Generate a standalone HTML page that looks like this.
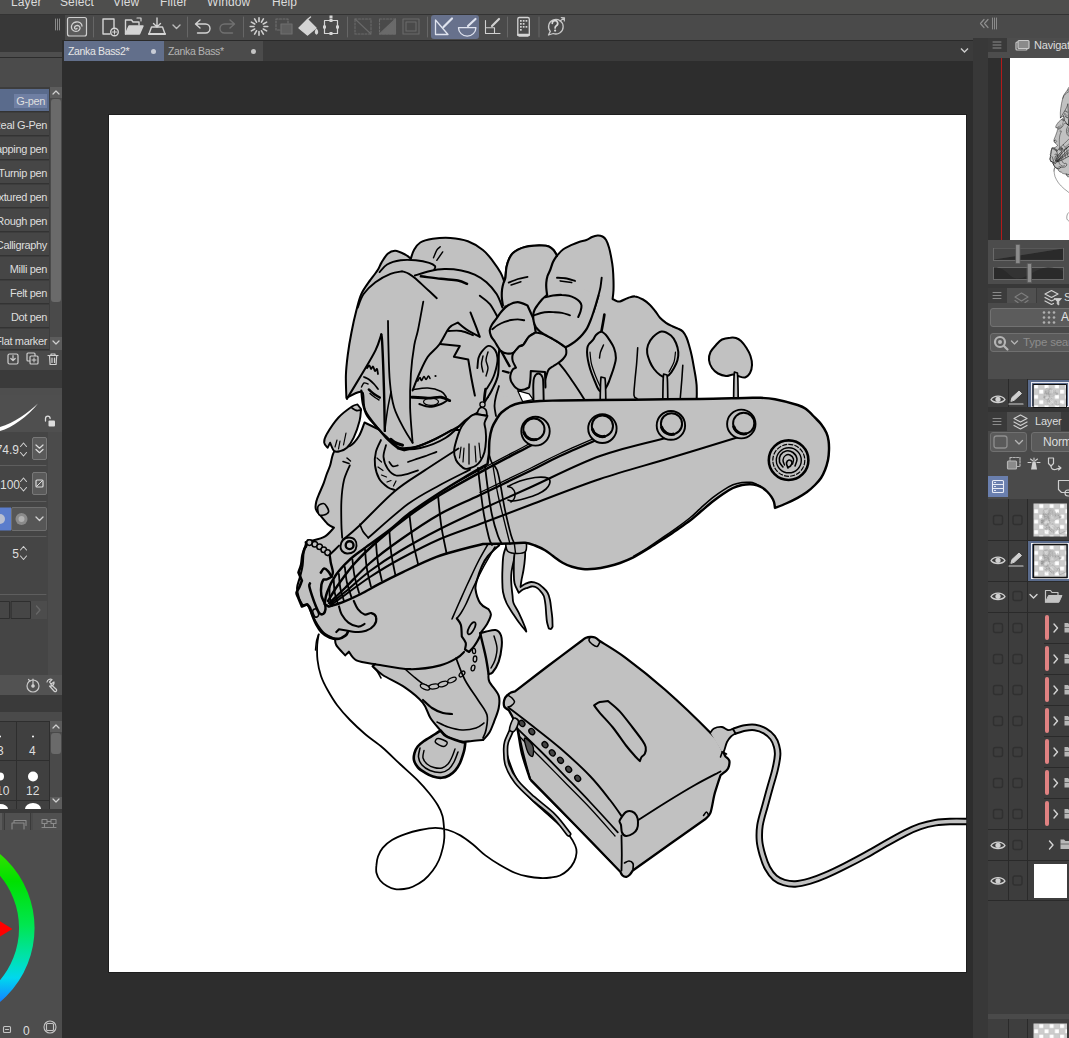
<!DOCTYPE html>
<html><head><meta charset="utf-8">
<style>
*{box-sizing:border-box;margin:0;padding:0}
html,body{width:1069px;height:1038px;overflow:hidden;background:#2d2d2d;font-family:"Liberation Sans",sans-serif;font-size:12px;color:#d2d2d2}
.a{position:absolute}
#menubar{left:0;top:0;width:1069px;height:14px;background:#4e4e4d}
#menubar span{position:absolute;top:-5px;font-size:12px;color:#dcdcdc;letter-spacing:.1px}
#toolbar{left:0;top:14px;width:1069px;height:26px;background:#4a4a4a;border-top:1px solid #333}
#tabrow{left:64px;top:39.5px;width:908.5px;height:21.5px;background:#3b3b3b;border-top:1.5px solid #2a2a2a}
.tab{position:absolute;top:0;height:20px;font-size:10.5px;letter-spacing:-.35px;line-height:20px;padding-left:4px}
#canvasbg{left:63px;top:61px;width:910px;height:977px;background:#2d2d2d}
#canvas{left:109px;top:115px;width:857.3px;height:857px;background:#fff;box-shadow:0 0 0 1px #1e1e1e}
#left{left:0;top:40px;width:62.3px;height:998px;background:#4a4a4a;overflow:hidden}
#right{left:974px;top:14px;width:95px;height:1024px;background:#3c3c3c}
.it{position:absolute;left:0;width:49px;height:23px;background:#464646;border-bottom:1px solid #333;text-align:right;padding-right:2px;line-height:24px;font-size:11px;letter-spacing:-.35px;color:#dedede;white-space:nowrap;overflow:hidden;direction:rtl}
</style></head><body>
<!--CANVASBG-->
<div class="a" id="canvasbg"></div>
<div class="a" id="canvas"></div>
<svg class="a" style="left:0;top:0" width="1069" height="1038" viewBox="0 0 1069 1038"><defs><clipPath id="cv"><rect x="109" y="115" width="857.3" height="857"/></clipPath></defs><g clip-path="url(#cv)" id="artg"><path d="M505.4,277.7C505.6,275.9 505.8,270.3 506.5,267.0C507.2,263.7 508.4,260.3 509.5,258.0C510.6,255.7 511.6,254.4 513.0,253.0C514.4,251.6 515.7,250.8 517.7,249.8C519.7,248.8 522.3,247.7 525.0,247.0C527.7,246.3 531.2,245.9 534.0,245.7C536.8,245.4 539.5,245.4 542.0,245.5C544.5,245.6 546.9,245.8 548.8,246.5C550.7,247.2 552.1,248.5 553.5,250.0C554.9,251.5 556.4,254.7 557.0,255.6C558.0,254.6 560.5,251.3 563.0,249.5C565.5,247.7 569.0,246.2 571.7,244.9C574.4,243.7 576.5,242.8 579.0,242.0C581.5,241.2 584.2,240.8 586.4,240.0C588.6,239.2 590.1,237.8 592.0,237.0C593.9,236.2 595.9,235.6 597.6,235.5C599.4,235.4 601.1,235.8 602.5,236.5C603.9,237.2 605.0,238.2 606.1,240.0C607.2,241.8 608.2,244.8 609.0,247.5C609.8,250.2 610.4,253.0 611.0,256.4C611.6,259.8 612.4,263.9 612.8,268.0C613.2,272.1 613.4,277.2 613.5,280.9C613.6,284.6 613.6,287.0 613.5,290.0C613.4,293.0 612.8,297.5 612.6,299.0C613.2,299.3 614.8,300.4 616.0,300.8C617.2,301.2 618.0,301.9 620.0,301.4C622.0,300.9 625.5,298.8 628.0,298.0C630.5,297.2 632.5,296.1 635.0,296.4C637.5,296.6 640.5,298.1 643.0,299.5C645.5,300.9 647.9,303.0 650.0,305.0C652.1,307.0 653.8,309.4 655.5,311.5C657.2,313.6 658.2,315.8 660.0,317.7C661.8,319.6 663.9,321.3 666.0,322.8C668.1,324.3 670.8,325.5 672.8,326.5C674.8,327.5 676.3,327.8 678.0,328.6C679.7,329.4 681.4,330.0 682.8,331.5C684.2,333.0 685.5,335.2 686.5,337.5C687.5,339.8 688.1,341.9 689.0,345.0C689.9,348.1 691.0,352.2 691.8,356.0C692.6,359.8 693.4,364.3 694.0,367.8C694.6,371.3 695.2,374.1 695.6,377.0C696.0,379.9 696.4,382.3 696.6,385.0C696.8,387.7 696.8,390.0 696.8,393.0C696.8,396.0 696.6,401.3 696.6,403.0L600.0,406.0L520.0,412.0L488.0,412.0L488.0,300.0L505.4,277.7Z" fill="#c1c1c1" stroke="#000" stroke-width="2.04" stroke-linejoin="round" stroke-linecap="round"/>
<path d="M637.7,347.7C637.5,350.6 637.0,359.6 636.5,365.0C636.0,370.4 635.4,374.9 635.0,380.0C634.6,385.1 633.7,392.2 634.0,395.3C634.3,398.4 636.5,398.0 637.0,398.5" fill="none" stroke="#000" stroke-width="1.56" stroke-linejoin="round" stroke-linecap="round"/>
<path d="M682.8,365.3C682.6,367.8 682.2,374.6 681.8,380.0C681.4,385.4 680.5,394.8 680.3,397.8" fill="none" stroke="#000" stroke-width="1.56" stroke-linejoin="round" stroke-linecap="round"/>
<path d="M601.7,277.7C601.5,279.2 601.0,284.0 600.5,287.0C600.0,290.0 599.1,292.9 598.4,295.7C597.6,298.5 596.8,301.3 596.0,304.0C595.2,306.7 593.9,310.7 593.5,312.0" fill="none" stroke="#000" stroke-width="1.92" stroke-linejoin="round" stroke-linecap="round"/>
<path d="M604.4,314.5C604.2,315.9 603.5,320.2 603.0,323.0C602.5,325.8 601.8,329.7 601.5,331.0" fill="none" stroke="#000" stroke-width="2.64" stroke-linejoin="round" stroke-linecap="round"/>
<path d="M601.2,331.7C599.6,331.8 597.4,333.6 596.0,335.0C594.6,336.4 594.2,338.4 593.0,339.9C591.8,341.4 590.0,342.6 589.0,344.0C588.0,345.4 587.6,346.1 587.3,348.1C587.0,350.1 587.0,353.3 587.3,356.0C587.6,358.7 588.2,361.6 588.9,364.4C589.6,367.2 590.5,370.3 591.5,373.0C592.5,375.7 593.7,378.6 594.6,380.8C595.5,383.1 596.2,384.9 597.0,386.5C597.8,388.1 598.5,389.9 599.5,390.7C600.5,391.4 601.9,391.6 603.0,391.0C604.1,390.4 605.1,388.9 606.1,387.4C607.1,385.9 608.0,383.9 608.8,382.0C609.6,380.1 610.1,378.4 611.0,375.9C611.9,373.4 613.2,370.0 614.0,367.0C614.8,364.0 615.9,361.1 615.9,357.9C615.9,354.7 615.1,351.0 614.0,348.0C612.9,345.0 610.8,342.1 609.4,339.9C608.0,337.6 606.9,335.9 605.5,334.5C604.1,333.1 602.8,331.6 601.2,331.7Z" fill="#c1c1c1" stroke="#000" stroke-width="2.04" stroke-linejoin="round" stroke-linecap="round"/>
<path d="M600.2,401.0C600.2,398.3 600.4,389.0 600.5,385.0C600.6,381.0 600.9,378.3 601.0,377.0L605.0,378.0C605.1,379.2 605.4,381.2 605.5,385.0C605.6,388.8 605.8,398.3 605.8,401.0" fill="#c1c1c1" stroke="#000" stroke-width="1.68" stroke-linejoin="round" stroke-linecap="round"/>
<path d="M661.5,331.5C658.5,331.8 655.2,334.8 653.0,337.0C650.8,339.2 649.0,342.3 648.0,345.0C647.0,347.7 646.9,350.2 647.2,353.0C647.5,355.8 648.9,359.3 650.0,362.0C651.1,364.7 652.3,366.8 654.0,369.0C655.7,371.2 658.2,373.7 660.0,375.0C661.8,376.3 663.0,377.0 664.5,377.0C666.0,377.0 667.4,376.5 669.0,375.0C670.6,373.5 672.6,370.5 674.0,368.0C675.4,365.5 676.8,362.7 677.5,360.0C678.2,357.3 678.5,354.8 678.3,352.0C678.0,349.2 677.2,345.8 676.0,343.0C674.8,340.2 673.4,337.4 671.0,335.5C668.6,333.6 664.5,331.2 661.5,331.5Z" fill="#c1c1c1" stroke="#000" stroke-width="2.04" stroke-linejoin="round" stroke-linecap="round"/>
<path d="M662.8,401.0C662.8,397.8 663.0,386.5 663.1,382.0C663.2,377.5 663.5,375.3 663.6,374.0L667.0,375.0C667.1,376.2 667.4,377.7 667.5,382.0C667.6,386.3 667.8,397.8 667.8,401.0" fill="#c1c1c1" stroke="#000" stroke-width="1.68" stroke-linejoin="round" stroke-linecap="round"/>
<path d="M730.4,337.7C728.1,337.9 724.4,338.3 722.0,339.5C719.6,340.7 717.9,342.9 716.0,345.0C714.1,347.1 711.7,349.5 710.5,352.0C709.3,354.5 708.8,357.3 709.0,360.0C709.2,362.7 710.5,365.8 712.0,368.0C713.5,370.2 715.7,372.2 718.0,373.5C720.3,374.8 723.5,375.8 726.0,376.0C728.5,376.2 731.0,374.5 733.0,374.5C735.0,374.5 736.0,375.5 738.0,376.0C740.0,376.5 743.0,378.0 745.0,377.5C747.0,377.0 748.8,375.1 750.0,373.0C751.2,370.9 751.9,367.8 752.0,365.0C752.1,362.2 751.4,358.8 750.5,356.0C749.6,353.2 748.1,350.5 746.5,348.0C744.9,345.5 742.8,342.7 741.0,341.0C739.2,339.3 737.8,338.6 736.0,338.0C734.2,337.4 732.7,337.4 730.4,337.7Z" fill="#c1c1c1" stroke="#000" stroke-width="2.04" stroke-linejoin="round" stroke-linecap="round"/>
<path d="M733.6,401.0C733.6,397.5 733.8,384.8 733.9,380.0C734.0,375.2 734.3,373.3 734.4,372.0L737.4,373.0C737.5,374.2 737.8,375.3 737.9,380.0C738.0,384.7 738.2,397.5 738.2,401.0" fill="#c1c1c1" stroke="#000" stroke-width="1.68" stroke-linejoin="round" stroke-linecap="round"/>
<path d="M603.5,345.0C603.0,346.2 601.2,349.8 600.5,352.0C599.8,354.2 599.7,357.0 599.5,358.0" fill="none" stroke="#000" stroke-width="1.44" stroke-linejoin="round" stroke-linecap="round"/>
<path d="M590.0,352.0C590.2,354.0 590.5,359.8 591.5,364.0C592.5,368.2 594.6,373.3 596.0,377.0C597.4,380.7 599.3,384.5 600.0,386.0" fill="none" stroke="#000" stroke-width="1.2" stroke-linejoin="round" stroke-linecap="round"/>
<path d="M675.5,352.0C675.2,353.7 675.1,358.7 674.0,362.0C672.9,365.3 669.8,370.3 669.0,372.0" fill="none" stroke="#000" stroke-width="1.2" stroke-linejoin="round" stroke-linecap="round"/>
<path d="M380.0,430.0L364.5,422.5C363.6,424.8 361.4,432.1 359.0,436.0C356.6,439.9 354.0,443.6 350.0,446.0C346.0,448.4 338.4,447.1 335.1,450.4C331.8,453.6 331.6,461.4 330.1,465.5C328.7,469.6 327.4,472.1 326.4,475.0C325.4,477.9 325.0,479.6 323.9,482.6C322.8,485.6 320.8,489.9 319.5,493.0C318.2,496.1 316.9,498.8 316.3,501.4C315.7,504.0 315.2,506.6 315.8,508.9C316.4,511.2 318.1,512.7 320.1,515.2C322.1,517.7 325.3,521.8 327.6,523.9C329.9,526.0 332.8,527.1 333.9,527.7C332.4,529.2 328.5,534.3 325.1,536.4C321.8,538.5 316.7,539.6 313.8,540.2C310.9,540.8 308.6,540.2 307.6,540.2C307.4,541.2 306.9,544.8 306.3,546.5C305.7,548.2 304.4,547.1 303.8,550.2C303.2,553.3 303.2,560.9 302.6,565.3C302.0,569.7 301.0,572.8 300.1,576.5C299.2,580.2 297.3,584.2 297.1,587.8C296.9,591.3 297.9,594.9 298.8,597.8C299.7,600.7 302.0,604.0 302.6,605.3C303.4,605.3 306.2,604.0 307.6,605.3C309.1,606.6 309.9,610.0 311.3,612.9C312.8,615.8 314.2,619.6 316.3,622.9C318.4,626.2 320.8,630.2 323.9,632.9C327.0,635.6 333.2,638.1 335.1,639.1C335.3,640.1 334.7,642.7 336.4,645.4C338.1,648.1 343.7,653.7 345.2,655.4L348.9,651.7C350.1,653.2 352.0,658.3 356.4,660.4C360.8,662.5 372.1,663.6 375.2,664.2L372.6,666.3C374.3,667.8 377.3,671.5 382.7,675.0C388.1,678.5 398.5,683.0 405.2,687.6C411.9,692.2 418.5,697.6 422.7,702.6C426.9,707.6 427.4,713.1 430.3,717.7C433.2,722.3 438.6,728.1 440.3,730.2C441.3,731.2 443.2,734.5 446.5,736.4C449.8,738.3 456.1,740.7 460.3,741.5C464.6,742.3 468.2,741.2 472.0,741.0C475.8,740.8 481.3,740.2 483.2,740.0C484.2,738.8 487.6,735.6 489.4,732.6C491.2,729.6 492.4,725.9 494.0,721.8C495.6,717.7 497.9,712.4 498.7,708.0C499.5,703.6 500.2,700.0 498.7,695.6C497.1,691.2 491.1,685.3 489.4,681.7C487.7,678.1 488.7,675.3 488.6,674.0C489.2,673.8 490.8,674.5 492.5,672.5C494.2,670.5 497.2,666.1 498.7,661.7C500.2,657.3 501.3,650.7 501.7,646.3C502.1,641.9 502.0,638.2 501.0,635.5C500.0,632.8 498.1,630.6 495.6,630.0C493.2,629.4 487.9,631.3 486.3,631.6L480.2,633.2C481.4,631.7 485.3,627.0 487.1,623.9C488.9,620.8 490.6,617.1 490.9,614.7C491.1,612.3 489.0,610.2 488.6,609.3C487.2,608.3 482.4,606.5 480.2,603.1C478.0,599.8 476.0,593.1 475.5,589.2C475.0,585.4 475.9,583.9 477.0,580.0C478.1,576.1 480.2,570.0 482.0,566.0C483.8,562.0 485.1,559.5 488.0,556.0C490.9,552.5 497.3,547.0 499.2,545.2L500.0,470.0L470.0,430.0L380.0,430.0Z" fill="#c1c1c1" stroke="#000" stroke-width="2.04" stroke-linejoin="round" stroke-linecap="round"/>
<path d="M470.0,400.0L508.0,396.0L502.0,472.0L470.0,445.0L470.0,400.0Z" fill="#c1c1c1" stroke="none"/>
<path d="M499.0,386.0C498.5,387.7 496.8,392.7 496.0,396.0C495.2,399.3 494.5,402.7 494.5,406.0C494.5,409.3 495.8,414.3 496.0,416.0" fill="none" stroke="#000" stroke-width="1.8" stroke-linejoin="round" stroke-linecap="round"/>
<path d="M346.4,397.8C346.3,394.1 345.7,382.4 345.9,375.3C346.1,368.2 346.8,362.4 347.7,355.3C348.6,348.2 349.9,340.2 351.4,332.7C352.8,325.2 354.7,316.7 356.4,310.2C358.1,303.7 359.1,298.9 361.4,293.9C363.7,288.9 368.7,282.4 370.2,280.1C371.4,278.4 375.8,272.9 377.7,270.0C379.6,267.1 379.8,265.3 381.5,262.6C383.2,259.9 385.4,255.8 387.7,253.8C390.0,251.8 392.4,250.7 395.3,250.8C398.2,250.9 402.7,253.3 405.3,254.6C407.9,255.9 409.9,258.1 410.8,258.8C411.3,257.3 412.4,252.7 414.0,250.0C415.6,247.3 417.2,244.4 420.3,242.5C423.4,240.6 427.8,239.6 432.8,238.8C437.8,238.1 444.5,237.6 450.4,238.0C456.2,238.4 462.5,239.3 467.9,241.3C473.3,243.3 478.7,246.7 482.9,250.0C487.1,253.3 490.1,257.5 493.0,261.3C495.9,265.1 498.6,269.2 500.5,272.6C502.4,276.0 503.6,279.9 504.2,281.4C504.5,284.5 506.4,291.9 506.0,300.0C505.6,308.1 503.2,321.3 502.0,330.0C500.8,338.7 499.7,344.5 499.0,352.0C498.3,359.5 499.2,368.7 498.0,375.0C496.8,381.3 494.0,385.8 492.0,390.0C490.0,394.2 488.3,396.3 486.0,400.0C483.7,403.7 481.4,408.6 478.0,412.0C474.6,415.4 470.8,416.1 465.4,420.4C460.0,424.7 452.9,433.4 445.4,438.0C437.9,442.6 427.8,446.3 420.3,448.0C412.8,449.7 405.7,449.7 400.3,448.0C394.9,446.3 391.5,441.4 387.7,438.0C383.9,434.6 381.4,432.5 377.7,427.9C373.9,423.3 367.7,416.2 365.2,410.4C362.7,404.5 364.2,395.7 362.7,392.8C361.2,389.9 357.1,393.0 356.0,393.0L346.4,397.8Z" fill="#c1c1c1" stroke="#000" stroke-width="2.04" stroke-linejoin="round" stroke-linecap="round"/>
<path d="M379.6,272.1C380.9,270.8 383.6,266.5 387.1,264.5C390.6,262.5 395.8,261.0 400.6,260.3C405.4,259.6 411.0,259.9 415.8,260.3C420.6,260.7 426.0,261.8 429.2,262.8C432.4,263.8 434.2,265.1 435.1,266.2C436.0,267.3 434.4,269.0 434.3,269.6" fill="none" stroke="#000" stroke-width="1.92" stroke-linejoin="round" stroke-linecap="round"/>
<path d="M357.7,307.5C358.7,305.2 360.7,298.2 363.6,294.0C366.6,289.8 370.9,285.6 375.4,282.2C379.9,278.8 386.0,275.6 390.5,273.8C395.0,272.0 400.3,271.7 402.3,271.3C403.4,271.7 406.8,272.6 409.0,273.8C411.2,275.1 413.0,276.4 415.8,278.8C418.6,281.2 422.4,284.9 425.9,288.1C429.4,291.3 435.0,296.5 436.8,298.2" fill="none" stroke="#000" stroke-width="1.92" stroke-linejoin="round" stroke-linecap="round"/>
<path d="M414.9,275.5C417.3,274.8 424.3,272.4 429.2,271.3C434.1,270.2 439.1,269.2 444.4,269.1C449.7,269.0 456.1,269.5 461.2,270.4C466.2,271.3 470.5,272.6 474.7,274.6C478.9,276.6 482.9,279.0 486.5,282.2C490.1,285.4 493.9,289.8 496.6,294.0C499.3,298.2 501.5,305.2 502.5,307.5" fill="none" stroke="#000" stroke-width="2.04" stroke-linejoin="round" stroke-linecap="round"/>
<path d="M420.8,276.3C424.2,276.7 434.8,278.1 441.0,278.8C447.2,279.5 453.5,279.6 457.9,280.5C462.2,281.4 465.6,283.3 467.1,283.9" fill="none" stroke="#000" stroke-width="2.4" stroke-linejoin="round" stroke-linecap="round"/>
<path d="M479.8,295.7C481.5,297.1 487.0,300.6 489.9,304.1C492.8,307.6 496.1,314.6 497.4,316.7" fill="none" stroke="#000" stroke-width="1.92" stroke-linejoin="round" stroke-linecap="round"/>
<path d="M433.5,257.8C434.1,256.5 435.7,252.0 436.8,250.2C437.9,248.4 439.6,247.4 440.2,246.8" fill="none" stroke="#000" stroke-width="1.44" stroke-linejoin="round" stroke-linecap="round"/>
<path d="M436.8,260.3L442.7,251.9" fill="none" stroke="#000" stroke-width="1.44" stroke-linejoin="round" stroke-linecap="round"/>
<path d="M423.3,301.6C422.4,306.3 419.5,322.8 418.0,330.0C416.5,337.2 415.5,337.7 414.3,345.0C413.1,352.3 411.6,363.3 410.9,373.7C410.2,384.1 409.8,395.9 410.1,407.4C410.4,418.9 412.2,436.8 412.6,442.7" fill="none" stroke="#000" stroke-width="1.8" stroke-linejoin="round" stroke-linecap="round"/>
<path d="M388.0,320.9C388.1,324.9 388.1,334.8 388.4,345.0C388.7,355.2 388.9,371.7 389.9,382.1C390.8,392.5 391.7,399.5 394.1,407.4C396.5,415.2 401.1,423.3 404.2,429.2C407.3,435.1 411.2,440.4 412.6,442.7" fill="none" stroke="#000" stroke-width="1.8" stroke-linejoin="round" stroke-linecap="round"/>
<path d="M346.9,398.9C349.4,394.7 357.3,381.8 362.1,373.7C366.9,365.6 372.4,356.7 375.6,350.1C378.8,343.6 380.4,337.0 381.3,334.4" fill="none" stroke="#000" stroke-width="2.04" stroke-linejoin="round" stroke-linecap="round"/>
<path d="M381.3,334.4C381.5,336.2 381.9,335.6 382.3,345.0C382.8,354.4 383.6,376.2 384.0,390.5C384.4,404.8 384.7,424.2 384.8,430.9" fill="none" stroke="#000" stroke-width="2.4" stroke-linejoin="round" stroke-linecap="round"/>
<path d="M384.8,430.9C385.2,427.4 386.5,416.5 387.5,410.0C388.5,403.5 390.4,395.0 391.0,392.0" fill="none" stroke="#000" stroke-width="1.56" stroke-linejoin="round" stroke-linecap="round"/>
<path d="M470.5,312.5C471.5,315.0 474.8,323.6 476.4,327.7C477.9,331.8 479.2,335.4 479.8,336.9C477.6,335.6 470.0,331.7 466.3,329.3C462.6,326.9 459.3,323.7 457.9,322.6C456.5,323.5 452.5,324.1 449.4,327.7C446.3,331.3 442.9,339.6 439.3,344.5C435.7,349.4 431.1,351.9 427.8,356.8C424.5,361.7 421.8,368.1 419.3,373.7C416.8,379.3 413.7,387.7 412.6,390.5" fill="none" stroke="#000" stroke-width="2.04" stroke-linejoin="round" stroke-linecap="round"/>
<path d="M448.6,331.0C450.7,331.0 457.1,330.3 461.2,331.0C465.3,331.7 471.0,334.5 473.0,335.2" fill="none" stroke="#000" stroke-width="1.8" stroke-linejoin="round" stroke-linecap="round"/>
<path d="M440.0,344.0L459.8,345.9L453.9,356.8L468.2,359.4C468.8,362.6 470.4,372.7 471.5,378.7C472.6,384.7 474.3,392.8 474.9,395.6" fill="none" stroke="#000" stroke-width="2.04" stroke-linejoin="round" stroke-linecap="round"/>
<path d="M477.4,368.0C477.6,366.3 477.8,360.7 478.5,358.0C479.2,355.3 480.0,353.8 481.6,351.8C483.2,349.8 486.1,346.2 488.4,345.9C490.6,345.6 493.6,348.1 495.1,350.1C496.6,352.1 497.2,355.5 497.5,358.0C497.8,360.5 497.3,362.6 496.8,365.3C496.3,368.0 495.3,371.5 494.5,374.0C493.7,376.5 493.1,377.9 491.8,380.4C490.5,382.9 487.6,387.4 486.7,388.8" fill="none" stroke="#000" stroke-width="1.92" stroke-linejoin="round" stroke-linecap="round"/>
<path d="M483.0,356.0C482.8,357.3 481.5,361.3 481.5,364.0C481.5,366.7 482.8,370.7 483.0,372.0" fill="none" stroke="#000" stroke-width="1.44" stroke-linejoin="round" stroke-linecap="round"/>
<path d="M488.0,352.0C487.7,353.3 486.0,357.3 486.0,360.0C486.0,362.7 488.0,365.3 488.0,368.0C488.0,370.7 486.3,374.7 486.0,376.0" fill="none" stroke="#000" stroke-width="1.44" stroke-linejoin="round" stroke-linecap="round"/>
<path d="M485.6,389.0C485.4,390.2 484.8,394.1 484.6,396.0C484.4,397.9 484.3,399.8 484.2,400.6" fill="none" stroke="#000" stroke-width="2.64" stroke-linejoin="round" stroke-linecap="round"/>
<circle cx="482.5" cy="404.5" r="2.6" fill="#c1c1c1" stroke="#000" stroke-width="1.3"/>
<path d="M477.0,414.0C477.3,413.2 478.1,410.1 479.0,409.0C479.9,407.9 481.3,407.3 482.5,407.5C483.7,407.7 485.2,408.7 486.0,410.0C486.8,411.3 486.8,414.6 487.0,415.5L477.0,414.0Z" fill="#c1c1c1" stroke="#000" stroke-width="1.68" stroke-linejoin="round" stroke-linecap="round"/>
<path d="M357.5,404.5C356.6,404.8 355.2,404.3 352.0,406.5C348.8,408.7 342.7,412.9 338.5,417.5C334.3,422.1 329.1,430.1 326.7,434.3C324.3,438.5 324.0,440.4 324.2,442.7C324.4,444.9 327.0,446.9 327.6,447.8L330.1,442.7C330.8,444.1 332.6,449.7 334.3,451.1C336.0,452.5 338.1,451.7 340.2,451.1C342.3,450.6 344.6,450.0 346.9,447.8C349.1,445.6 351.6,442.2 353.7,437.7C355.8,433.2 358.4,425.6 359.6,420.8C360.8,416.0 360.8,411.0 361.0,409.0L357.5,404.5Z" fill="#c1c1c1" stroke="#000" stroke-width="1.92" stroke-linejoin="round" stroke-linecap="round"/>
<path d="M352.0,408.0C352.8,408.4 355.0,410.2 356.5,410.5C358.0,410.8 360.2,410.1 361.0,410.0" fill="none" stroke="#000" stroke-width="1.8" stroke-linejoin="round" stroke-linecap="round"/>
<path d="M337.0,440.0L335.0,447.0" fill="none" stroke="#000" stroke-width="1.2" stroke-linejoin="round" stroke-linecap="round"/>
<path d="M340.0,441.0L338.5,449.0" fill="none" stroke="#000" stroke-width="1.2" stroke-linejoin="round" stroke-linecap="round"/>
<path d="M346.0,433.0L343.5,445.0" fill="none" stroke="#000" stroke-width="1.2" stroke-linejoin="round" stroke-linecap="round"/>
<path d="M476.0,414.0C475.1,414.4 472.7,414.5 470.4,416.5C468.1,418.5 464.1,422.9 462.0,426.0C459.9,429.1 459.2,431.3 457.9,435.4C456.6,439.5 454.4,446.3 454.1,450.4C453.8,454.5 454.9,457.5 456.0,460.0C457.1,462.5 458.9,464.0 460.4,465.5C461.9,467.0 463.3,468.4 465.0,468.8C466.7,469.2 468.6,468.6 470.4,468.0C472.2,467.4 474.3,466.7 476.0,465.5C477.7,464.3 479.0,463.2 480.4,461.0C481.8,458.8 483.6,455.4 484.5,452.0C485.4,448.6 485.8,444.1 486.0,440.4C486.2,436.7 485.9,432.9 485.6,430.0C485.4,427.1 484.2,425.3 484.5,423.0C484.8,420.7 487.0,417.2 487.5,416.0L476.0,414.0Z" fill="#c1c1c1" stroke="#000" stroke-width="1.92" stroke-linejoin="round" stroke-linecap="round"/>
<path d="M461.0,447.0L459.5,458.0" fill="none" stroke="#000" stroke-width="1.2" stroke-linejoin="round" stroke-linecap="round"/>
<path d="M464.0,448.0L463.0,462.0" fill="none" stroke="#000" stroke-width="1.2" stroke-linejoin="round" stroke-linecap="round"/>
<path d="M469.0,444.0L469.0,464.0" fill="none" stroke="#000" stroke-width="1.32" stroke-linejoin="round" stroke-linecap="round"/>
<path d="M475.0,446.0L476.0,462.0" fill="none" stroke="#000" stroke-width="1.2" stroke-linejoin="round" stroke-linecap="round"/>
<path d="M479.0,443.0L480.5,458.0" fill="none" stroke="#000" stroke-width="1.2" stroke-linejoin="round" stroke-linecap="round"/>
<path d="M411.8,397.2C414.5,397.4 422.9,398.1 427.8,398.1C432.7,398.1 437.6,396.8 441.2,397.2C444.8,397.6 448.3,400.0 449.7,400.6" fill="none" stroke="#000" stroke-width="2.88" stroke-linejoin="round" stroke-linecap="round"/>
<path d="M412.6,389.7C415.1,389.4 423.0,387.7 427.8,388.0C432.6,388.3 438.1,389.9 441.2,391.4C444.3,392.9 445.4,396.2 446.3,397.2" fill="none" stroke="#000" stroke-width="1.68" stroke-linejoin="round" stroke-linecap="round"/>
<path d="M419.3,404.0C421.0,404.5 425.8,406.8 429.4,406.8C433.0,406.8 438.3,405.1 441.2,404.0C444.1,402.9 446.0,401.1 447.0,400.5" fill="none" stroke="#000" stroke-width="1.92" stroke-linejoin="round" stroke-linecap="round"/>
<ellipse cx="431" cy="401.8" rx="7.5" ry="3.6" fill="none" stroke="#000" stroke-width="1.2"/>
<path d="M417.7,381.0C418.1,380.4 419.4,377.6 420.0,377.5C420.6,377.4 420.8,380.7 421.5,380.5C422.2,380.3 423.2,376.7 424.0,376.5C424.8,376.3 425.2,379.6 426.0,379.5C426.8,379.4 427.8,376.2 428.5,376.0C429.2,375.8 429.8,378.1 430.0,378.5" fill="none" stroke="#000" stroke-width="1.56" stroke-linejoin="round" stroke-linecap="round"/>
<circle cx="435.5" cy="376" r="1.1" fill="#000"/>
<path d="M368.8,389.5C369.7,390.2 372.2,392.6 374.0,394.0C375.8,395.4 378.8,397.0 379.8,397.6" fill="none" stroke="#000" stroke-width="2.4" stroke-linejoin="round" stroke-linecap="round"/>
<path d="M370.0,393.5C370.8,394.2 373.5,396.4 375.0,397.5C376.5,398.6 378.3,399.6 379.0,400.0" fill="none" stroke="#000" stroke-width="1.44" stroke-linejoin="round" stroke-linecap="round"/>
<path d="M364.0,377.0C364.8,377.4 367.3,378.3 369.0,379.5C370.7,380.7 372.5,382.4 374.0,384.0C375.5,385.6 377.3,388.2 378.0,389.0" fill="none" stroke="#000" stroke-width="1.8" stroke-linejoin="round" stroke-linecap="round"/>
<path d="M367.0,368.0C367.4,367.6 368.8,365.3 369.5,365.5C370.2,365.7 370.4,368.8 371.0,369.0C371.6,369.2 372.3,366.2 373.0,366.5C373.7,366.8 374.3,370.6 375.0,371.0C375.7,371.4 376.5,368.5 377.0,369.0C377.5,369.5 377.8,373.2 378.0,374.0" fill="none" stroke="#000" stroke-width="1.8" stroke-linejoin="round" stroke-linecap="round"/>
<path d="M361.5,387.0C361.9,386.3 362.9,383.5 364.0,383.0C365.1,382.5 367.3,383.8 368.0,384.0" fill="none" stroke="#000" stroke-width="1.44" stroke-linejoin="round" stroke-linecap="round"/>
<path d="M361.3,390.5C361.6,392.8 361.9,399.8 362.9,404.0C363.9,408.2 364.7,411.9 367.1,415.8C369.5,419.7 373.9,423.7 377.3,427.6C380.7,431.5 384.0,435.9 387.4,439.3C390.8,442.7 394.7,446.0 397.5,447.8C400.3,449.6 403.1,449.9 404.2,450.3C407.0,449.4 415.4,447.3 421.0,445.2C426.6,443.1 431.4,440.9 437.9,437.7C444.4,434.5 456.1,427.9 459.8,425.9" fill="none" stroke="#000" stroke-width="2.16" stroke-linejoin="round" stroke-linecap="round"/>
<path d="M390.7,439.3C391.6,439.9 394.0,442.0 396.0,443.0C398.0,444.0 401.4,444.8 402.5,445.2" fill="none" stroke="#000" stroke-width="3.12" stroke-linejoin="round" stroke-linecap="round"/>
<path d="M505.4,277.7C505.6,275.9 505.8,270.3 506.5,267.0C507.2,263.7 508.4,260.3 509.5,258.0C510.6,255.7 511.6,254.4 513.0,253.0C514.4,251.6 515.7,250.8 517.7,249.8C519.7,248.8 522.3,247.7 525.0,247.0C527.7,246.3 531.2,245.9 534.0,245.7C536.8,245.4 539.5,245.4 542.0,245.5C544.5,245.6 546.9,245.8 548.8,246.5C550.7,247.2 552.1,248.5 553.5,250.0C554.9,251.5 556.4,254.7 557.0,255.6C556.3,256.7 554.1,259.7 553.0,262.0C551.9,264.3 551.3,267.2 550.4,269.5C549.5,271.8 548.2,273.8 547.5,276.0C546.8,278.2 546.5,280.6 546.3,282.6C546.1,284.6 546.2,286.1 546.3,288.0C546.4,289.9 547.0,293.0 547.1,294.0L537.0,300.0L527.5,305.5C525.9,304.9 521.0,302.2 517.7,302.2C514.4,302.2 509.5,304.9 507.8,305.5L502.9,305.5C502.7,304.1 501.9,299.7 501.8,297.0C501.7,294.3 501.8,291.4 502.1,289.1C502.4,286.8 502.9,284.9 503.5,283.0C504.1,281.1 505.1,278.6 505.4,277.7Z" fill="#c1c1c1" stroke="none"/>
<path d="M502.9,305.5C502.7,304.1 501.9,299.7 501.8,297.0C501.7,294.3 501.8,291.4 502.1,289.1C502.4,286.8 502.9,284.9 503.5,283.0C504.1,281.1 504.9,280.4 505.4,277.7C505.9,275.0 505.8,270.3 506.5,267.0C507.2,263.7 508.4,260.3 509.5,258.0C510.6,255.7 511.6,254.4 513.0,253.0C514.4,251.6 515.7,250.8 517.7,249.8C519.7,248.8 522.3,247.7 525.0,247.0C527.7,246.3 531.2,245.9 534.0,245.7C536.8,245.4 539.5,245.4 542.0,245.5C544.5,245.6 546.9,245.8 548.8,246.5C550.7,247.2 552.1,248.5 553.5,250.0C554.9,251.5 556.4,254.7 557.0,255.6" fill="none" stroke="#000" stroke-width="2.16" stroke-linejoin="round" stroke-linecap="round"/>
<path d="M508.7,282.6C510.2,282.0 514.9,280.0 518.0,279.0C521.1,278.0 525.9,277.2 527.5,276.8" fill="none" stroke="#000" stroke-width="1.8" stroke-linejoin="round" stroke-linecap="round"/>
<path d="M511.1,285.0L520.9,281.8" fill="none" stroke="#000" stroke-width="1.56" stroke-linejoin="round" stroke-linecap="round"/>
<path d="M527.5,305.5C525.9,304.9 521.0,302.2 517.7,302.2C514.4,302.2 510.5,303.9 507.8,305.5C505.1,307.1 503.4,309.3 501.5,311.5C499.6,313.7 498.0,316.4 496.4,318.6C494.8,320.8 493.1,322.6 492.0,324.5C490.9,326.4 490.0,328.1 489.8,330.0C489.6,331.9 490.2,334.1 491.0,336.0C491.8,337.9 493.5,339.7 494.7,341.5C495.9,343.3 496.9,345.4 498.0,347.0C499.1,348.6 499.8,350.2 501.3,351.3C502.8,352.4 505.1,353.2 507.0,353.5C508.9,353.8 511.2,353.7 512.8,353.0C514.4,352.3 515.4,350.6 516.5,349.5C517.6,348.4 518.1,347.2 519.3,346.4C520.4,345.6 522.7,345.1 523.4,344.8C524.4,343.4 527.0,338.7 529.1,336.6C531.2,334.6 534.6,333.2 535.7,332.5L534.0,320.0L527.5,305.5Z" fill="#c1c1c1" stroke="#000" stroke-width="2.16" stroke-linejoin="round" stroke-linecap="round"/>
<path d="M492.3,329.2C493.2,328.5 495.9,326.2 498.0,325.0C500.1,323.8 502.4,322.7 504.6,321.9C506.8,321.1 508.8,320.4 511.0,320.0C513.2,319.6 515.5,319.4 517.7,319.4C519.9,319.4 523.1,320.1 524.2,320.2" fill="none" stroke="#000" stroke-width="1.92" stroke-linejoin="round" stroke-linecap="round"/>
<path d="M519.3,346.4C518.3,347.5 514.8,351.2 513.6,353.0C512.4,354.8 512.4,355.6 512.3,357.0C512.2,358.4 512.2,359.4 512.8,361.2C513.4,363.0 515.5,366.6 516.0,367.7C515.5,368.0 513.8,368.0 512.8,369.4C511.8,370.8 510.6,374.0 510.3,375.9C510.0,377.8 510.4,379.1 510.8,380.5C511.2,381.9 512.0,382.9 512.8,384.1C513.6,385.3 514.4,386.6 515.5,387.5C516.6,388.4 517.8,389.5 519.3,389.8C520.8,390.1 522.9,389.9 524.5,389.5C526.1,389.1 528.3,387.8 529.1,387.4C529.3,386.2 530.0,382.7 530.3,380.0C530.6,377.3 530.7,372.5 530.8,371.0L545.0,372.0L545.5,387.4C545.5,386.3 545.2,382.9 545.3,381.0C545.4,379.1 545.7,377.8 546.3,375.9C546.9,374.0 547.6,371.0 548.8,369.4C550.0,367.8 551.9,367.1 553.5,366.0C555.1,364.9 557.0,364.0 558.6,362.8C560.2,361.6 561.8,360.4 563.0,359.0C564.2,357.6 565.5,356.0 566.0,354.6C566.5,353.2 566.4,351.7 566.3,350.5C566.2,349.3 565.7,347.8 565.6,347.3C564.2,346.3 560.4,343.6 557.0,341.5C553.6,339.4 549.0,336.5 545.5,335.0C542.0,333.5 537.3,332.9 535.7,332.5C534.6,333.2 531.2,334.6 529.1,336.6C527.0,338.7 525.0,343.2 523.4,344.8C521.8,346.4 520.0,346.1 519.3,346.4Z" fill="#c1c1c1" stroke="#000" stroke-width="2.04" stroke-linejoin="round" stroke-linecap="round"/>
<path d="M558.6,362.8C559.8,364.3 563.6,368.8 566.0,372.0C568.4,375.2 570.8,378.8 573.0,382.0C575.2,385.2 577.0,388.0 579.0,391.0C581.0,394.0 583.8,398.5 584.8,400.0" fill="none" stroke="#000" stroke-width="1.92" stroke-linejoin="round" stroke-linecap="round"/>
<path d="M547.1,294.9C546.2,295.7 543.6,297.7 542.0,299.5C540.4,301.3 538.5,303.8 537.3,305.5C536.0,307.2 535.2,308.4 534.5,310.0C533.8,311.6 533.3,313.4 533.2,315.3C533.1,317.2 533.3,319.6 533.7,321.5C534.1,323.4 534.7,325.1 535.7,326.8C536.8,328.5 538.4,330.1 540.0,331.5C541.6,332.9 543.7,333.9 545.5,335.0C547.3,336.1 549.1,336.9 551.0,338.0C552.9,339.1 555.2,340.4 557.0,341.5C558.8,342.6 560.1,343.5 561.5,344.5C562.9,345.5 564.9,346.8 565.6,347.3C566.6,346.8 569.6,345.2 571.5,344.0C573.4,342.8 575.3,341.5 577.1,339.9C578.9,338.3 580.9,336.4 582.5,334.5C584.1,332.6 585.7,330.7 587.0,328.4C588.3,326.1 589.4,323.2 590.5,320.5C591.6,317.8 592.6,314.8 593.5,312.0C594.4,309.2 595.2,306.7 596.0,304.0C596.8,301.3 598.0,297.1 598.4,295.7L575.0,285.0L555.0,288.0L547.1,294.9Z" fill="#c1c1c1" stroke="none"/>
<path d="M547.1,294.9C546.2,295.7 543.6,297.7 542.0,299.5C540.4,301.3 538.5,303.8 537.3,305.5C536.0,307.2 535.2,308.4 534.5,310.0C533.8,311.6 533.3,313.4 533.2,315.3C533.1,317.2 533.3,319.6 533.7,321.5C534.1,323.4 534.7,325.1 535.7,326.8C536.8,328.5 538.4,330.1 540.0,331.5C541.6,332.9 543.7,333.9 545.5,335.0C547.3,336.1 549.1,336.9 551.0,338.0C552.9,339.1 555.2,340.4 557.0,341.5C558.8,342.6 560.1,343.5 561.5,344.5C562.9,345.5 564.9,346.8 565.6,347.3C566.6,346.8 569.6,345.2 571.5,344.0C573.4,342.8 575.3,341.5 577.1,339.9C578.9,338.3 580.9,336.4 582.5,334.5C584.1,332.6 585.7,330.7 587.0,328.4C588.3,326.1 589.4,323.2 590.5,320.5C591.6,317.8 592.6,314.8 593.5,312.0C594.4,309.2 595.2,306.7 596.0,304.0C596.8,301.3 598.0,297.1 598.4,295.7" fill="none" stroke="#000" stroke-width="2.16" stroke-linejoin="round" stroke-linecap="round"/>
<path d="M545.5,297.3C546.8,297.0 550.3,295.9 553.0,295.5C555.7,295.1 559.2,294.8 561.9,294.9C564.6,294.9 566.8,295.3 569.0,295.8C571.2,296.3 573.2,297.2 575.0,298.1C576.8,299.1 578.4,300.3 579.5,301.5C580.6,302.7 581.3,303.8 581.5,305.5C581.7,307.2 581.0,309.6 580.5,311.5C580.0,313.4 578.6,316.1 578.2,317.0" fill="none" stroke="#000" stroke-width="2.04" stroke-linejoin="round" stroke-linecap="round"/>
<path d="M534.0,315.3C535.2,314.9 538.5,313.6 541.0,313.0C543.5,312.4 546.5,312.1 548.8,312.0C551.1,311.9 552.8,312.1 555.0,312.2C557.2,312.3 559.4,312.4 561.9,312.9C564.4,313.4 568.6,314.9 570.0,315.3" fill="none" stroke="#000" stroke-width="1.92" stroke-linejoin="round" stroke-linecap="round"/>
<path d="M557.0,255.6C556.3,256.7 554.1,259.7 553.0,262.0C551.9,264.3 551.3,267.2 550.4,269.5C549.5,271.8 548.2,273.8 547.5,276.0C546.8,278.2 546.5,280.6 546.3,282.6C546.1,284.6 546.2,285.9 546.3,288.0C546.4,290.1 547.0,293.8 547.1,294.9" fill="none" stroke="#000" stroke-width="2.16" stroke-linejoin="round" stroke-linecap="round"/>
<path d="M557.0,277.7C558.6,277.8 563.8,278.0 566.8,278.5C569.8,279.0 573.6,280.5 575.0,280.9" fill="none" stroke="#000" stroke-width="1.92" stroke-linejoin="round" stroke-linecap="round"/>
<path d="M560.2,280.9L571.7,282.6" fill="none" stroke="#000" stroke-width="1.56" stroke-linejoin="round" stroke-linecap="round"/>
<path d="M533.5,401.0C533.5,398.3 533.2,388.9 533.3,385.0C533.4,381.1 533.4,379.4 534.2,377.5C535.0,375.6 536.9,373.5 538.3,373.5C539.7,373.5 541.8,375.6 542.6,377.5C543.4,379.4 543.1,381.1 543.3,385.0C543.5,388.9 543.6,398.3 543.7,401.0" fill="#c1c1c1" stroke="#000" stroke-width="1.92" stroke-linejoin="round" stroke-linecap="round"/>
<path d="M501.3,351.3C502.0,352.6 504.1,356.5 505.5,359.0C506.9,361.5 508.8,364.9 509.5,366.1" fill="none" stroke="#000" stroke-width="2.4" stroke-linejoin="round" stroke-linecap="round"/>
<path d="M502.9,371.0L508.7,372.6" fill="none" stroke="#000" stroke-width="2.16" stroke-linejoin="round" stroke-linecap="round"/>
<path d="M517.7,390.7 L529.1,393.9 L533.2,399.7 L522.6,401.6 Z" fill="#fff" stroke="#000" stroke-width="1.2" stroke-linejoin="round"/>
<path d="M380.9,440.1C380.1,442.1 376.9,447.7 375.9,451.9C374.9,456.1 374.4,460.9 375.0,465.4C375.6,469.9 377.1,475.2 379.2,478.8C381.3,482.4 385.2,485.4 387.7,487.2C390.2,489.0 393.3,489.4 394.4,489.8" fill="none" stroke="#000" stroke-width="1.92" stroke-linejoin="round" stroke-linecap="round"/>
<path d="M386.0,445.2C385.6,447.1 383.2,453.0 383.5,456.9C383.8,460.8 385.6,465.6 387.7,468.7C389.8,471.8 392.7,474.6 396.1,475.5C399.5,476.4 404.2,474.7 407.9,473.8C411.5,472.9 416.3,471.0 418.0,470.4" fill="none" stroke="#000" stroke-width="1.8" stroke-linejoin="round" stroke-linecap="round"/>
<path d="M397.8,448.5C400.9,448.2 409.9,448.5 416.3,446.8C422.8,445.1 430.6,441.2 436.5,438.4C442.4,435.6 449.1,431.4 451.6,430.0" fill="none" stroke="#000" stroke-width="1.92" stroke-linejoin="round" stroke-linecap="round"/>
<path d="M407.9,462.0C410.4,461.1 418.2,458.6 423.0,456.9C427.8,455.2 434.2,452.7 436.5,451.9" fill="none" stroke="#000" stroke-width="1.68" stroke-linejoin="round" stroke-linecap="round"/>
<path d="M389.3,462.0C389.9,462.7 391.3,465.6 392.7,466.2C394.1,466.8 396.9,465.5 397.8,465.4" fill="none" stroke="#000" stroke-width="1.68" stroke-linejoin="round" stroke-linecap="round"/>
<path d="M377.0,458.0L381.5,462.0" fill="none" stroke="#000" stroke-width="1.2" stroke-linejoin="round" stroke-linecap="round"/>
<path d="M378.0,467.0L383.0,470.5" fill="none" stroke="#000" stroke-width="1.2" stroke-linejoin="round" stroke-linecap="round"/>
<path d="M381.5,475.0L386.5,477.0" fill="none" stroke="#000" stroke-width="1.2" stroke-linejoin="round" stroke-linecap="round"/>
<path d="M387.0,482.0L391.0,480.5" fill="none" stroke="#000" stroke-width="1.2" stroke-linejoin="round" stroke-linecap="round"/>
<path d="M393.5,486.0L396.0,481.0" fill="none" stroke="#000" stroke-width="1.2" stroke-linejoin="round" stroke-linecap="round"/>
<path d="M349.8,465.4C348.8,467.9 345.3,474.6 343.9,480.5C342.5,486.4 341.8,493.4 341.4,500.7C341.0,508.0 341.3,518.1 341.4,524.3C341.5,530.5 342.1,535.5 342.2,537.8" fill="none" stroke="#000" stroke-width="1.8" stroke-linejoin="round" stroke-linecap="round"/>
<path d="M343.0,461.5L349.0,463.5" fill="none" stroke="#000" stroke-width="1.56" stroke-linejoin="round" stroke-linecap="round"/>
<path d="M347.0,458.0L350.5,461.0" fill="none" stroke="#000" stroke-width="1.44" stroke-linejoin="round" stroke-linecap="round"/>
<path d="M318.0,506.5C318.8,504.7 322.0,503.4 323.5,503.5C325.0,503.6 326.2,505.6 327.0,507.0C327.8,508.4 329.0,510.7 328.5,512.0C328.0,513.3 325.6,514.6 324.0,515.0C322.4,515.4 320.0,515.9 319.0,514.5C318.0,513.1 317.2,508.3 318.0,506.5Z" fill="#c1c1c1" stroke="#000" stroke-width="1.68" stroke-linejoin="round" stroke-linecap="round"/>
<path d="M342.6,540.2C345.3,537.8 350.4,534.1 359.0,526.0C367.6,517.9 383.4,500.8 394.4,491.5C405.3,482.2 414.0,477.6 424.7,470.4C435.4,463.2 452.8,452.1 458.4,448.5" fill="none" stroke="#000" stroke-width="1.92" stroke-linejoin="round" stroke-linecap="round"/>
<path d="M368.3,537.8C374.9,532.2 395.9,512.9 407.9,504.1C419.8,495.3 429.6,490.8 440.0,485.0C450.4,479.2 465.0,472.2 470.0,469.6" fill="none" stroke="#000" stroke-width="1.8" stroke-linejoin="round" stroke-linecap="round"/>
<path d="M359.9,524.3C360.4,525.5 361.6,529.2 363.0,531.5C364.4,533.8 367.4,536.8 368.3,537.8" fill="none" stroke="#000" stroke-width="1.68" stroke-linejoin="round" stroke-linecap="round"/>
<path d="M305.9,542.3C305.9,542.8 306.5,542.9 305.9,545.0C305.3,547.1 303.3,551.9 302.5,555.1C301.7,558.4 301.9,561.6 301.2,564.5C300.5,567.4 298.9,571.2 298.5,572.6L301.9,580.7C301.4,581.8 300.1,585.5 299.2,587.5C298.3,589.5 296.6,591.1 296.5,592.9C296.4,594.7 297.6,596.0 298.5,598.3C299.4,600.5 301.3,605.0 301.9,606.4L307.3,604.3C307.8,604.9 309.2,606.0 310.0,607.7C310.8,609.4 311.0,611.8 312.0,614.5C313.0,617.2 314.4,621.0 316.0,623.9C317.6,626.8 319.1,629.8 321.4,632.0C323.6,634.2 326.6,636.3 329.5,637.4C332.4,638.5 336.3,639.1 339.0,638.8C341.7,638.5 344.2,636.5 345.7,635.4C347.2,634.3 347.4,632.6 347.8,632.0" fill="none" stroke="#000" stroke-width="2.64" stroke-linejoin="round" stroke-linecap="round"/>
<path d="M310.0,583.4C309.9,583.9 309.0,584.1 309.3,586.1C309.6,588.1 310.9,592.2 312.0,595.6C313.1,599.0 314.8,603.5 316.0,606.4C317.2,609.3 318.1,611.9 319.4,613.1C320.6,614.3 322.5,614.5 323.5,613.8C324.5,613.1 325.3,610.8 325.5,609.1C325.7,607.4 325.5,606.0 324.8,603.7C324.1,601.5 322.0,598.8 321.4,595.6C320.8,592.5 321.0,587.5 321.4,584.8C321.8,582.1 323.1,580.3 323.5,579.4C324.1,579.4 325.4,579.8 326.8,579.4C328.2,579.0 330.8,577.2 331.6,576.7C331.0,575.8 329.4,572.6 328.2,571.3C326.9,569.9 325.3,568.4 324.1,568.6C322.9,568.8 321.4,571.9 320.8,572.6" fill="none" stroke="#000" stroke-width="2.52" stroke-linejoin="round" stroke-linecap="round"/>
<path d="M327.5,555.0C327.8,555.0 328.9,553.7 329.5,555.1C330.1,556.5 330.3,560.4 330.9,563.2C331.5,566.0 332.8,569.8 332.9,572.0C333.0,574.2 331.8,575.9 331.6,576.7" fill="none" stroke="#000" stroke-width="2.4" stroke-linejoin="round" stroke-linecap="round"/>
<circle cx="309.5" cy="542.6" r="2.8" fill="#c1c1c1" stroke="#000" stroke-width="1.5"/>
<circle cx="314.8" cy="544.2" r="2.8" fill="#c1c1c1" stroke="#000" stroke-width="1.5"/>
<circle cx="319.6" cy="546.8" r="2.8" fill="#c1c1c1" stroke="#000" stroke-width="1.5"/>
<circle cx="323.8" cy="549.8" r="2.8" fill="#c1c1c1" stroke="#000" stroke-width="1.5"/>
<circle cx="327.6" cy="552.6" r="2.8" fill="#c1c1c1" stroke="#000" stroke-width="1.5"/>
<path d="M312.7,611.0C312.8,609.7 315.0,608.3 316.0,609.0C317.0,609.7 318.8,613.7 318.7,615.0C318.6,616.3 316.3,617.7 315.3,617.0C314.3,616.3 312.6,612.3 312.7,611.0Z" fill="#c1c1c1" stroke="#000" stroke-width="1.56" stroke-linejoin="round" stroke-linecap="round"/>
<path d="M339.0,545.6C338.3,546.3 336.5,548.1 334.9,549.7C333.3,551.3 330.4,554.1 329.5,555.0" fill="none" stroke="#000" stroke-width="1.92" stroke-linejoin="round" stroke-linecap="round"/>
<path d="M487.5,545.0C485.9,547.8 481.2,555.7 478.0,562.0C474.8,568.3 471.2,576.2 468.0,583.0C464.8,589.8 461.7,597.0 459.0,603.0C456.3,609.0 453.2,616.3 452.0,619.0" fill="none" stroke="#000" stroke-width="1.56" stroke-linejoin="round" stroke-linecap="round"/>
<path d="M495.0,547.0C493.2,550.2 487.5,559.5 484.0,566.0C480.5,572.5 477.0,579.7 474.0,586.0C471.0,592.3 468.2,599.5 466.0,604.0C463.8,608.5 462.5,610.6 461.0,613.0C459.5,615.4 457.5,617.5 456.8,618.4" fill="none" stroke="#000" stroke-width="1.56" stroke-linejoin="round" stroke-linecap="round"/>
<ellipse cx="471.6" cy="628.2" rx="2.6" ry="6.8" transform="rotate(28 471.6 628.2)" fill="#c1c1c1" stroke="#000" stroke-width="1.7"/>
<path d="M456.8,618.4C457.5,619.5 460.1,622.0 460.9,625.0C461.7,628.0 461.6,634.5 461.8,636.4C462.5,637.5 465.3,640.8 465.8,643.0C466.3,645.2 465.1,648.4 465.0,649.5L469.1,652.0C469.9,651.0 472.6,648.1 474.0,646.3C475.4,644.5 476.2,643.2 477.3,641.3C478.4,639.4 480.1,635.9 480.6,634.8" fill="none" stroke="#000" stroke-width="2.16" stroke-linejoin="round" stroke-linecap="round"/>
<path d="M480.2,633.2C480.7,635.2 482.0,640.9 483.0,645.0C484.0,649.1 485.1,653.2 486.0,658.0C486.9,662.8 488.2,671.3 488.6,674.0" fill="none" stroke="#000" stroke-width="2.4" stroke-linejoin="round" stroke-linecap="round"/>
<path d="M375.2,664.2C381.1,665.0 399.4,669.0 410.3,669.2C421.2,669.4 432.5,667.3 440.3,665.4C448.1,663.5 453.1,660.2 457.0,658.0C460.9,655.8 462.8,653.0 464.0,652.0" fill="none" stroke="#000" stroke-width="2.16" stroke-linejoin="round" stroke-linecap="round"/>
<path d="M405.0,669.0C406.3,670.2 410.0,673.5 413.0,676.0C416.0,678.5 420.2,682.2 423.0,684.0C425.8,685.8 428.8,686.1 430.0,686.5" fill="none" stroke="#000" stroke-width="1.56" stroke-linejoin="round" stroke-linecap="round"/>
<ellipse cx="425" cy="687" rx="5" ry="2.4" transform="rotate(25 425 687)" fill="#c1c1c1" stroke="#000" stroke-width="1.3"/>
<ellipse cx="434" cy="686.5" rx="5" ry="2.4" transform="rotate(-8 434 686.5)" fill="#c1c1c1" stroke="#000" stroke-width="1.3"/>
<ellipse cx="443" cy="684" rx="5" ry="2.4" transform="rotate(-18 443 684)" fill="#c1c1c1" stroke="#000" stroke-width="1.3"/>
<ellipse cx="452" cy="680" rx="4.5" ry="2.2" transform="rotate(-25 452 680)" fill="#c1c1c1" stroke="#000" stroke-width="1.3"/>
<ellipse cx="462" cy="674" rx="3.5" ry="2" transform="rotate(-45 462 674)" fill="#c1c1c1" stroke="#000" stroke-width="1.3"/>
<ellipse cx="473" cy="668" rx="3" ry="1.8" transform="rotate(-75 473 668)" fill="#c1c1c1" stroke="#000" stroke-width="1.3"/>
<ellipse cx="475" cy="659" rx="3" ry="1.8" transform="rotate(-85 475 659)" fill="#c1c1c1" stroke="#000" stroke-width="1.3"/>
<ellipse cx="474" cy="651" rx="2.6" ry="1.6" transform="rotate(-95 474 651)" fill="#c1c1c1" stroke="#000" stroke-width="1.3"/>
<path d="M456.0,658.0C457.5,661.7 461.3,673.0 465.0,680.0C468.7,687.0 474.3,694.2 478.0,700.0C481.7,705.8 485.7,710.0 487.0,715.0C488.3,720.0 486.7,726.2 486.0,730.0C485.3,733.8 483.5,736.7 483.0,738.0" fill="none" stroke="#000" stroke-width="1.68" stroke-linejoin="round" stroke-linecap="round"/>
<path d="M423.0,700.0C424.5,701.3 428.7,705.8 432.0,708.0C435.3,710.2 439.7,712.0 443.0,713.0C446.3,714.0 450.5,713.8 452.0,714.0" fill="none" stroke="#000" stroke-width="2.16" stroke-linejoin="round" stroke-linecap="round"/>
<path d="M437.0,722.0C438.8,722.8 443.8,725.7 448.0,727.0C452.2,728.3 457.3,729.8 462.0,730.0C466.7,730.2 472.3,729.2 476.0,728.0C479.7,726.8 482.7,723.8 484.0,723.0" fill="none" stroke="#000" stroke-width="1.56" stroke-linejoin="round" stroke-linecap="round"/>
<path d="M372.6,666.3C373.3,667.1 375.6,669.0 377.0,671.0C378.4,673.0 380.3,676.8 381.0,678.0" fill="none" stroke="#000" stroke-width="1.56" stroke-linejoin="round" stroke-linecap="round"/>
<path d="M494.0,636.0C494.5,638.0 496.8,644.0 497.0,648.0C497.2,652.0 496.0,656.7 495.0,660.0C494.0,663.3 491.7,666.7 491.0,668.0" fill="none" stroke="#000" stroke-width="1.44" stroke-linejoin="round" stroke-linecap="round"/>
<path d="M440.5,730.5C439.6,731.1 438.1,732.2 435.3,734.0C432.6,735.8 426.9,738.9 424.0,741.0C421.1,743.1 419.3,744.5 417.7,746.5C416.1,748.5 415.1,750.7 414.5,753.0C413.9,755.3 413.4,757.8 414.0,760.2C414.6,762.6 416.1,765.4 418.0,767.5C419.9,769.6 422.8,771.3 425.3,772.8C427.8,774.3 430.3,775.7 433.0,776.5C435.7,777.3 438.8,778.0 441.5,777.8C444.2,777.6 446.7,776.8 449.0,775.5C451.3,774.2 453.5,772.4 455.3,770.3C457.1,768.2 458.8,765.5 460.0,763.0C461.2,760.5 462.1,757.5 462.8,755.2C463.6,752.9 464.1,751.1 464.5,749.0C464.9,746.9 465.2,743.8 465.3,742.7C464.5,742.5 463.4,742.5 460.3,741.5C457.2,740.5 449.8,738.2 446.5,736.4C443.2,734.6 441.5,731.5 440.5,730.5Z" fill="#c1c1c1" stroke="#000" stroke-width="2.64" stroke-linejoin="round" stroke-linecap="round"/>
<path d="M420.0,748.0C419.8,749.5 418.2,754.2 418.5,757.0C418.8,759.8 420.1,762.8 422.0,765.0C423.9,767.2 426.8,769.2 430.0,770.5C433.2,771.8 437.8,772.8 441.0,772.5C444.2,772.2 446.8,770.8 449.0,769.0C451.2,767.2 452.5,764.8 454.0,762.0C455.5,759.2 457.3,753.7 458.0,752.0" fill="none" stroke="#000" stroke-width="1.56" stroke-linejoin="round" stroke-linecap="round"/>
<path d="M424.0,750.5C423.8,751.8 422.5,755.8 423.0,758.0C423.5,760.2 425.2,762.4 427.0,764.0C428.8,765.6 431.5,766.8 434.0,767.5C436.5,768.2 439.7,768.6 442.0,768.0C444.3,767.4 446.3,765.8 448.0,764.0C449.7,762.2 450.8,759.5 452.0,757.0C453.2,754.5 454.5,750.3 455.0,749.0" fill="none" stroke="#000" stroke-width="1.44" stroke-linejoin="round" stroke-linecap="round"/>
<path d="M438.0,738.5C436.1,738.6 434.5,741.2 435.5,742.5C436.5,743.8 442.1,746.6 444.0,746.5C445.9,746.4 448.0,743.3 447.0,742.0C446.0,740.7 439.9,738.4 438.0,738.5Z" fill="#c1c1c1" stroke="#000" stroke-width="1.44" stroke-linejoin="round" stroke-linecap="round"/>
<path d="M507.5,543.0C506.8,545.0 504.3,550.8 503.5,555.0C502.7,559.2 502.7,563.8 502.5,568.0C502.3,572.2 502.2,576.0 502.3,580.0C502.4,584.0 502.3,588.2 503.0,592.0C503.7,595.8 504.9,599.5 506.5,603.0C508.1,606.5 510.4,609.6 512.5,612.9C514.6,616.1 516.7,619.4 519.0,622.5C521.3,625.6 525.1,630.1 526.3,631.6C526.1,630.8 526.2,630.1 525.0,627.0C523.8,623.9 520.7,616.9 518.8,612.9C516.9,608.9 514.5,605.9 513.5,603.0C512.5,600.1 512.9,598.6 512.5,595.3C512.1,592.0 511.5,586.9 511.3,583.0C511.1,579.1 510.9,576.6 511.5,572.0C512.1,567.4 514.1,559.7 515.0,555.2C515.9,550.7 516.7,546.7 517.0,545.0L507.5,543.0Z" fill="#c1c1c1" stroke="#000" stroke-width="1.8" stroke-linejoin="round" stroke-linecap="round"/>
<path d="M515.0,548.0C514.8,550.0 514.2,556.0 514.0,560.0C513.8,564.0 513.7,568.2 513.8,572.0C513.9,575.8 513.7,579.5 514.5,583.0C515.3,586.5 518.1,591.2 518.8,592.8C519.5,592.2 521.5,590.3 523.0,589.5C524.5,588.7 526.2,588.3 527.6,587.8C529.0,587.3 530.2,586.6 531.5,586.5C532.8,586.4 534.1,586.3 535.5,587.0C536.9,587.7 538.6,589.0 540.0,590.5C541.4,592.0 542.9,593.6 543.8,596.0C544.7,598.4 545.1,601.8 545.5,605.0C545.9,608.2 546.0,612.6 546.3,615.4C546.5,618.2 546.6,619.8 547.0,622.0C547.4,624.2 548.5,627.4 548.8,628.5C549.2,628.6 550.4,629.3 551.0,629.0C551.6,628.7 552.3,627.0 552.6,626.6C552.5,625.2 552.5,620.7 552.3,618.0C552.1,615.3 551.8,613.3 551.4,610.3C551.0,607.3 550.6,602.9 550.0,600.0C549.4,597.1 548.8,594.9 547.6,592.8C546.4,590.7 544.7,589.0 543.0,587.5C541.3,586.0 539.6,584.4 537.6,583.5C535.6,582.6 533.1,581.9 531.0,582.0C528.9,582.1 526.8,583.2 525.0,584.0C523.2,584.8 521.2,586.5 520.5,587.0C520.7,585.8 521.0,582.8 521.5,580.0C522.0,577.2 522.9,573.7 523.5,570.0C524.1,566.3 524.7,561.9 525.0,557.7C525.3,553.5 525.2,547.1 525.3,545.0L515.0,548.0Z" fill="#c1c1c1" stroke="#000" stroke-width="1.8" stroke-linejoin="round" stroke-linecap="round"/>
<path d="M505.5,542.5C505.8,543.9 505.8,549.2 507.5,551.0C509.2,552.8 513.0,553.4 516.0,553.5C519.0,553.6 523.8,553.2 525.5,551.5C527.2,549.8 526.3,544.8 526.5,543.5" fill="#c1c1c1" stroke="#000" stroke-width="1.56" stroke-linejoin="round" stroke-linecap="round"/>
<path d="M514.5,545.0L515.5,553.0" fill="none" stroke="#000" stroke-width="1.44" stroke-linejoin="round" stroke-linecap="round"/>
<path d="M489.0,454.0C489.1,451.7 489.0,444.3 489.5,440.0C490.0,435.7 490.8,431.6 492.0,428.0C493.2,424.4 495.4,421.1 497.0,418.5C498.6,415.9 499.3,414.5 501.5,412.5C503.7,410.5 506.9,408.1 510.0,406.5C513.1,404.9 515.0,403.9 520.0,403.0C525.0,402.1 533.3,401.4 540.0,401.0C546.7,400.6 550.0,400.7 560.0,400.5C570.0,400.3 585.0,400.2 600.0,400.0C615.0,399.8 633.3,399.7 650.0,399.5C666.7,399.3 684.2,399.2 700.0,399.0C715.8,398.8 735.0,398.2 745.0,398.0C755.0,397.8 755.0,397.6 760.0,397.8C765.0,398.0 768.7,398.1 775.0,399.3C781.3,400.5 792.4,403.4 797.6,405.0C802.8,406.6 803.1,406.9 806.0,409.0C808.9,411.1 812.5,415.2 815.0,417.7C817.5,420.2 819.1,421.5 821.0,424.0C822.9,426.5 825.1,429.9 826.4,432.7C827.7,435.5 828.2,438.1 828.6,441.0C829.0,443.9 829.1,446.8 829.0,450.0C828.9,453.2 828.7,456.7 828.0,460.0C827.3,463.3 826.2,467.0 825.0,470.0C823.8,473.0 822.7,475.5 821.0,478.0C819.3,480.5 817.3,482.7 815.0,485.0C812.7,487.3 809.9,489.9 807.0,492.0C804.1,494.1 801.1,495.9 797.6,497.8C794.1,499.7 789.8,501.8 786.0,503.5C782.2,505.2 776.8,507.2 775.0,507.9C774.8,506.9 774.6,503.9 774.0,502.0C773.4,500.1 772.5,498.4 771.3,496.6C770.1,494.9 768.5,493.0 767.0,491.5C765.5,490.0 764.2,488.8 762.5,487.8C760.8,486.8 759.0,485.9 757.0,485.3C755.0,484.7 753.0,484.2 750.5,484.2C748.0,484.1 744.9,484.4 742.0,485.0C739.1,485.6 736.2,486.5 733.0,488.0C729.8,489.5 726.3,491.8 723.0,494.0C719.7,496.2 716.7,498.4 713.0,501.3C709.3,504.2 704.8,508.1 701.0,511.3C697.2,514.5 694.6,517.1 690.4,520.3C686.2,523.5 680.6,527.3 676.0,530.5C671.4,533.7 667.5,536.2 662.8,539.3C658.1,542.3 653.0,545.7 648.0,548.8C643.0,551.9 637.5,555.3 632.8,557.7C628.1,560.1 624.2,561.5 620.0,563.0C615.8,564.5 611.9,565.5 607.7,566.5C603.5,567.5 599.2,568.4 595.0,568.8C590.8,569.2 586.5,569.3 582.7,569.0C578.9,568.7 575.4,567.8 572.0,566.8C568.6,565.8 565.8,564.5 562.6,562.7C559.4,560.9 555.9,558.1 553.0,556.0C550.1,553.9 548.0,552.0 545.0,550.2C542.0,548.5 538.3,546.8 535.0,545.5C531.7,544.2 529.1,543.0 525.0,542.7C520.9,542.4 517.5,543.3 510.5,543.5C503.5,543.7 487.6,543.9 483.0,544.0C480.0,544.8 472.8,546.4 465.0,548.5C457.2,550.6 446.9,553.0 436.5,556.9C426.1,560.8 412.4,567.6 402.9,572.1C393.4,576.6 386.3,580.2 379.3,583.9C372.3,587.5 367.0,590.9 360.8,594.0C354.6,597.1 347.5,600.3 342.2,602.4C336.9,604.5 331.0,605.9 328.8,606.6L324.6,604.0C325.0,602.0 325.3,597.0 327.1,592.3C328.9,587.5 331.9,580.8 335.5,575.5C339.1,570.2 344.2,564.8 349.0,560.3C353.8,555.8 357.4,553.5 364.1,548.5C370.8,543.5 381.7,536.0 389.4,530.0C397.1,524.0 401.9,518.9 410.3,512.6C418.7,506.4 430.9,498.4 440.0,492.5C449.1,486.6 457.1,481.8 465.0,477.0C472.9,472.2 483.8,466.2 487.5,464.0L489.0,454.0Z" fill="#c1c1c1" stroke="#000" stroke-width="2.46" stroke-linejoin="round" stroke-linecap="round"/>
<path d="M760.0,486.3C759.2,485.9 756.6,484.2 755.0,483.6C753.4,483.0 752.7,482.6 750.5,482.4C748.3,482.2 744.9,482.1 742.0,482.5C739.1,482.9 736.2,483.5 733.0,484.8C729.8,486.1 726.3,488.2 723.0,490.3C719.7,492.4 716.7,494.5 713.0,497.4C709.3,500.3 704.8,504.4 701.0,507.8C697.2,511.2 694.6,514.1 690.4,517.5C686.2,520.9 680.6,525.0 676.0,528.3C671.4,531.6 667.5,534.3 662.8,537.5C658.1,540.7 652.8,544.5 648.0,547.6C643.2,550.7 636.3,554.6 634.0,556.0" fill="none" stroke="#000" stroke-width="1.56" stroke-linejoin="round" stroke-linecap="round"/>
<path d="M339.0,606.4C339.4,607.8 340.1,611.8 341.7,614.5C343.3,617.2 345.7,620.6 348.4,622.6C351.1,624.6 355.2,626.4 357.9,626.6C360.6,626.8 363.5,624.4 364.6,623.9" fill="none" stroke="#000" stroke-width="2.04" stroke-linejoin="round" stroke-linecap="round"/>
<path d="M353.8,601.0C354.5,602.4 356.1,606.9 357.9,609.1C359.7,611.4 362.4,613.8 364.6,614.5C366.9,615.2 369.5,612.6 371.4,613.1C373.3,613.6 375.7,615.2 376.1,617.2C376.6,619.2 375.8,623.0 374.1,625.3C372.4,627.5 369.1,629.6 366.0,630.7C362.9,631.8 358.2,632.0 355.2,632.0C352.2,632.0 350.5,631.2 347.8,630.7C345.1,630.2 340.5,629.5 339.0,629.3L336.3,632.0" fill="none" stroke="#000" stroke-width="2.16" stroke-linejoin="round" stroke-linecap="round"/>
<path d="M478.0,468.0C478.4,471.7 479.5,482.2 480.5,490.0C481.5,497.8 482.6,507.0 484.0,515.0C485.4,523.0 487.7,533.0 489.0,538.0C490.3,543.0 491.5,543.8 492.0,545.0" fill="none" stroke="#000" stroke-width="1.8" stroke-linejoin="round" stroke-linecap="round"/>
<path d="M485.0,466.0C485.5,470.0 486.8,481.8 488.0,490.0C489.2,498.2 490.3,507.3 492.0,515.0C493.7,522.7 496.3,531.2 498.0,536.0C499.7,540.8 501.3,542.7 502.0,544.0" fill="none" stroke="#000" stroke-width="1.8" stroke-linejoin="round" stroke-linecap="round"/>
<path d="M489.0,454.0C489.4,455.3 490.2,459.3 491.5,462.0C492.8,464.7 495.5,466.2 497.0,470.0C498.5,473.8 499.2,478.3 500.5,485.0C501.8,491.7 503.2,501.7 505.0,510.0C506.8,518.3 509.4,529.3 511.0,535.0C512.6,540.7 513.9,542.5 514.5,544.0" fill="none" stroke="#000" stroke-width="1.68" stroke-linejoin="round" stroke-linecap="round"/>
<path d="M493.0,466.0C493.8,470.8 495.8,484.7 498.0,495.0C500.2,505.3 504.0,519.8 506.0,528.0C508.0,536.2 509.3,541.3 510.0,544.0" fill="none" stroke="#000" stroke-width="1.32" stroke-linejoin="round" stroke-linecap="round"/>
<path d="M438.2,497.0C438.7,501.7 439.8,515.9 441.2,525.3C442.6,534.7 445.7,548.9 446.6,553.6" fill="none" stroke="#000" stroke-width="1.8" stroke-linejoin="round" stroke-linecap="round"/>
<path d="M409.6,516.0C410.1,520.0 411.2,531.9 412.6,539.9C414.0,547.8 417.1,559.7 418.0,563.7" fill="none" stroke="#000" stroke-width="1.8" stroke-linejoin="round" stroke-linecap="round"/>
<path d="M389.4,531.5C389.7,535.1 390.2,545.9 391.2,553.0C392.1,560.2 394.6,571.0 395.3,574.6" fill="none" stroke="#000" stroke-width="1.8" stroke-linejoin="round" stroke-linecap="round"/>
<path d="M375.9,541.5C376.2,544.8 376.7,554.5 377.7,561.0C378.6,567.5 381.1,577.2 381.8,580.5" fill="none" stroke="#000" stroke-width="1.8" stroke-linejoin="round" stroke-linecap="round"/>
<path d="M365.0,549.5C365.3,552.6 365.8,561.8 366.8,568.0C367.7,574.1 370.2,583.3 370.9,586.4" fill="none" stroke="#000" stroke-width="1.8" stroke-linejoin="round" stroke-linecap="round"/>
<path d="M352.4,559.5C352.8,562.3 353.4,570.7 354.6,576.3C355.7,581.9 358.3,590.3 359.1,593.1" fill="none" stroke="#000" stroke-width="1.8" stroke-linejoin="round" stroke-linecap="round"/>
<path d="M344.8,567.0C345.2,569.5 345.8,577.1 346.9,582.2C348.1,587.3 350.7,594.9 351.5,597.4" fill="none" stroke="#000" stroke-width="1.8" stroke-linejoin="round" stroke-linecap="round"/>
<path d="M338.9,574.0C339.1,576.2 339.4,582.9 340.2,587.4C341.0,591.8 343.3,598.5 343.9,600.7" fill="none" stroke="#000" stroke-width="1.8" stroke-linejoin="round" stroke-linecap="round"/>
<path d="M333.8,580.5C333.9,582.5 334.0,588.4 334.7,592.3C335.4,596.2 337.4,602.1 338.0,604.1" fill="none" stroke="#000" stroke-width="1.8" stroke-linejoin="round" stroke-linecap="round"/>
<path d="M329.6,587.2C329.6,588.8 329.2,593.4 329.7,596.5C330.1,599.6 331.7,604.2 332.1,605.8" fill="none" stroke="#000" stroke-width="1.8" stroke-linejoin="round" stroke-linecap="round"/>
<path d="M546.0,437.0C543.3,438.5 539.2,441.1 530.0,446.0C520.8,450.9 506.0,458.3 491.0,466.5C476.0,474.7 453.5,486.9 440.0,495.0C426.5,503.1 420.0,507.7 410.0,515.0C400.0,522.3 389.2,531.0 380.0,539.0C370.8,547.0 362.0,555.3 355.0,563.0C348.0,570.7 342.5,578.7 338.0,585.0C333.5,591.3 329.7,598.3 328.0,601.0" fill="none" stroke="#000" stroke-width="2.52" stroke-linejoin="round" stroke-linecap="round"/>
<path d="M601.0,438.0C594.2,441.0 571.8,450.5 560.0,456.0C548.2,461.5 543.3,464.5 530.0,471.0C516.7,477.5 495.0,487.8 480.0,495.0C465.0,502.2 453.3,506.5 440.0,514.0C426.7,521.5 411.7,531.8 400.0,540.0C388.3,548.2 379.2,555.0 370.0,563.0C360.8,571.0 351.8,581.3 345.0,588.0C338.2,594.7 331.7,600.5 329.0,603.0" fill="none" stroke="#000" stroke-width="2.28" stroke-linejoin="round" stroke-linecap="round"/>
<path d="M670.0,437.0C658.3,440.2 623.3,447.6 600.0,456.0C576.7,464.4 550.0,478.5 530.0,487.5C510.0,496.5 495.0,503.1 480.0,510.0C465.0,516.9 453.3,522.2 440.0,529.0C426.7,535.8 411.7,544.0 400.0,551.0C388.3,558.0 379.2,564.2 370.0,571.0C360.8,577.8 351.7,586.5 345.0,592.0C338.3,597.5 332.5,602.0 330.0,604.0" fill="none" stroke="#000" stroke-width="2.04" stroke-linejoin="round" stroke-linecap="round"/>
<path d="M742.0,436.0C730.0,439.7 693.7,450.8 670.0,458.0C646.3,465.2 623.3,471.2 600.0,479.0C576.7,486.8 550.0,497.5 530.0,505.0C510.0,512.5 495.0,518.3 480.0,524.0C465.0,529.7 453.3,533.2 440.0,539.0C426.7,544.8 411.7,552.7 400.0,559.0C388.3,565.3 379.2,571.0 370.0,577.0C360.8,583.0 351.5,590.3 345.0,595.0C338.5,599.7 333.3,603.3 331.0,605.0" fill="none" stroke="#000" stroke-width="2.04" stroke-linejoin="round" stroke-linecap="round"/>
<path d="M546.0,434.0C543.3,435.6 539.2,438.5 530.0,443.5C520.8,448.5 504.3,456.9 491.0,464.0C477.7,471.1 456.8,482.3 450.0,486.0" fill="none" stroke="#000" stroke-width="1.32" stroke-linejoin="round" stroke-linecap="round"/>
<path d="M601.0,435.5C594.2,438.5 571.8,448.0 560.0,453.5C548.2,459.0 543.3,462.0 530.0,468.5C516.7,475.0 488.3,488.5 480.0,492.5" fill="none" stroke="#000" stroke-width="1.32" stroke-linejoin="round" stroke-linecap="round"/>
<path d="M340.5,546.0C340.7,544.2 341.6,541.4 343.0,540.0C344.4,538.6 347.0,537.5 349.0,537.5C351.0,537.5 353.8,538.6 355.0,540.0C356.2,541.4 356.7,544.1 356.5,546.0C356.3,547.9 355.6,550.2 354.0,551.5C352.4,552.8 349.0,553.6 347.0,553.5C345.0,553.4 343.1,552.2 342.0,551.0C340.9,549.8 340.3,547.8 340.5,546.0Z" fill="#c1c1c1" stroke="#000" stroke-width="1.92" stroke-linejoin="round" stroke-linecap="round"/>
<circle cx="349.6" cy="545.2" r="3.9" fill="#c1c1c1" stroke="#000" stroke-width="2.4"/>
<ellipse cx="535.5" cy="431.2" rx="14.2" ry="14.4" fill="#c1c1c1" stroke="#000" stroke-width="1.9"/>
<circle cx="533.9" cy="429.2" r="10.6" fill="#c1c1c1" stroke="#000" stroke-width="2"/>
<path d="M523.7,431.7 A10.6,10.6 0 0 0 536.9,439.4" fill="none" stroke="#000" stroke-width="3"/>
<ellipse cx="602.4" cy="428.6" rx="14.2" ry="14.4" fill="#c1c1c1" stroke="#000" stroke-width="1.9"/>
<circle cx="602.4" cy="426.0" r="10.6" fill="#c1c1c1" stroke="#000" stroke-width="2"/>
<path d="M592.2,428.5 A10.6,10.6 0 0 0 605.4,436.2" fill="none" stroke="#000" stroke-width="3"/>
<ellipse cx="670.9" cy="425.4" rx="14.2" ry="14.4" fill="#c1c1c1" stroke="#000" stroke-width="1.9"/>
<circle cx="671.5" cy="423.79999999999995" r="10.6" fill="#c1c1c1" stroke="#000" stroke-width="2"/>
<path d="M661.3,426.3 A10.6,10.6 0 0 0 674.5,434.0" fill="none" stroke="#000" stroke-width="3"/>
<ellipse cx="741.3" cy="424" rx="14.2" ry="14.4" fill="#c1c1c1" stroke="#000" stroke-width="1.9"/>
<circle cx="743.6999999999999" cy="423.4" r="10.6" fill="#c1c1c1" stroke="#000" stroke-width="2"/>
<path d="M733.5,425.9 A10.6,10.6 0 0 0 746.7,433.6" fill="none" stroke="#000" stroke-width="3"/>
<path d="M507.8,486.4C509.8,485.5 515.5,482.5 520.0,481.0C524.5,479.5 530.8,478.1 535.0,477.5C539.2,476.9 542.6,477.0 545.0,477.3C547.4,477.6 548.6,478.4 549.4,479.5C550.1,480.6 550.1,482.4 549.5,484.0C548.9,485.6 547.9,487.3 546.0,489.0C544.1,490.7 541.5,492.4 538.0,494.0C534.5,495.6 529.2,497.3 525.0,498.5C520.8,499.7 515.8,500.8 513.0,501.0C510.2,501.2 508.8,500.2 508.0,500.0" fill="none" stroke="#000" stroke-width="1.68" stroke-linejoin="round" stroke-linecap="round"/>
<path d="M507.8,486.4C508.5,486.7 510.8,486.9 512.0,488.0C513.2,489.1 514.7,491.2 515.0,493.0C515.3,494.8 514.7,497.5 514.0,499.0C513.3,500.5 511.5,501.5 511.0,502.0" fill="none" stroke="#000" stroke-width="1.56" stroke-linejoin="round" stroke-linecap="round"/>
<circle cx="788.6" cy="460.2" r="19.8" fill="#c1c1c1" stroke="#000" stroke-width="2.6"/>
<circle cx="788.8" cy="460.3" r="16" fill="none" stroke="#000" stroke-width="1.2" stroke-dasharray="5 1.2"/>
<circle cx="788.8" cy="460.3" r="12.5" fill="none" stroke="#000" stroke-width="1.4"/>
<path d="M795.0,466.0C795.3,464.8 797.3,461.2 797.0,459.0C796.7,456.8 794.8,453.8 793.0,452.5C791.2,451.2 788.1,450.6 786.0,451.0C783.9,451.4 781.6,453.2 780.5,455.0C779.4,456.8 779.1,460.0 779.5,462.0C779.9,464.0 782.4,466.2 783.0,467.0" fill="none" stroke="#000" stroke-width="1.56" stroke-linejoin="round" stroke-linecap="round"/>
<path d="M792.5,464.0C792.7,463.2 793.9,460.5 793.5,459.0C793.1,457.5 791.3,455.6 790.0,455.0C788.7,454.4 786.7,454.7 785.5,455.5C784.3,456.3 783.2,458.4 783.0,460.0C782.8,461.6 784.2,464.2 784.5,465.0" fill="none" stroke="#000" stroke-width="1.44" stroke-linejoin="round" stroke-linecap="round"/>
<path d="M788.0,468.0C787.8,467.2 786.3,464.3 786.5,463.0C786.7,461.7 788.1,460.2 789.0,460.0C789.9,459.8 791.8,461.0 792.0,462.0C792.2,463.0 791.1,465.2 790.5,466.0C789.9,466.8 788.8,466.8 788.5,467.0" fill="none" stroke="#000" stroke-width="1.68" stroke-linejoin="round" stroke-linecap="round"/>
<path d="M600.2,641.3C604.4,644.0 614.4,649.5 625.3,657.6C636.2,665.7 651.2,677.5 665.4,690.0C679.6,702.5 701.5,723.7 710.4,732.7C719.3,741.7 716.5,740.0 719.0,744.0C721.5,748.0 724.4,754.4 725.5,756.5C726.1,757.1 728.6,758.7 729.2,760.3C729.8,761.9 729.4,764.3 729.0,766.0C728.6,767.7 728.1,768.8 726.7,770.3C725.3,771.8 721.5,774.5 720.5,775.3C719.9,777.1 718.0,782.6 717.0,786.0C716.0,789.4 715.3,790.9 714.2,795.4C713.1,799.9 711.9,809.0 710.4,812.9C708.9,816.8 706.2,818.0 705.4,819.0C699.5,823.2 682.1,835.4 670.0,844.0C657.9,852.6 639.0,866.1 632.8,870.5C632.3,871.2 631.0,873.5 630.0,874.5C629.0,875.5 627.8,876.6 626.5,876.8C625.2,877.0 623.5,876.4 622.5,875.5C621.5,874.6 620.7,872.3 620.3,871.7C612.8,863.9 590.0,840.5 575.0,825.0C560.0,809.5 537.5,786.7 530.0,779.0C528.7,774.8 524.1,762.1 522.0,754.0C519.9,745.9 519.1,736.2 517.6,730.2C516.1,724.2 514.5,721.3 513.0,718.0C511.5,714.7 509.5,711.5 508.8,710.2C508.1,709.7 505.3,708.2 504.5,707.0C503.7,705.8 503.7,704.2 503.8,702.7C503.9,701.2 504.4,699.3 505.0,698.0C505.6,696.7 507.1,695.5 507.5,695.0C508.1,694.6 509.8,693.1 511.0,692.5C512.2,691.9 514.3,691.6 515.0,691.4C520.5,687.2 536.7,674.6 548.0,666.0C559.3,657.4 576.9,644.3 582.7,640.0C583.2,639.6 584.8,638.3 586.0,637.8C587.2,637.3 588.7,637.0 590.2,637.0C591.7,637.0 593.3,636.8 595.0,637.5C596.7,638.2 599.3,640.7 600.2,641.3Z" fill="#c1c1c1" stroke="#000" stroke-width="2.28" stroke-linejoin="round" stroke-linecap="round"/>
<path d="M508.8,707.7C512.3,710.4 521.5,717.3 530.0,724.0C538.5,730.7 550.0,739.3 560.0,748.0C570.0,756.7 581.7,767.3 590.0,776.0C598.3,784.7 604.5,793.0 610.0,800.0C615.5,807.0 620.7,814.9 622.8,817.9" fill="none" stroke="#000" stroke-width="1.92" stroke-linejoin="round" stroke-linecap="round"/>
<path d="M637.8,820.4C642.3,817.5 655.5,808.9 665.0,803.0C674.5,797.1 685.8,790.2 695.0,785.0C704.2,779.8 716.2,773.8 720.5,771.5" fill="none" stroke="#000" stroke-width="1.92" stroke-linejoin="round" stroke-linecap="round"/>
<path d="M621.5,835.4C621.5,838.7 621.8,849.1 621.8,855.0C621.8,860.9 621.5,867.9 621.5,870.5" fill="none" stroke="#000" stroke-width="1.8" stroke-linejoin="round" stroke-linecap="round"/>
<path d="M622.5,816.0C623.1,815.3 624.4,812.8 626.0,812.0C627.6,811.2 630.2,810.9 632.0,811.5C633.8,812.1 635.5,813.8 636.5,815.5C637.5,817.2 637.9,819.8 638.0,822.0C638.1,824.2 637.8,827.1 637.0,829.0C636.2,830.9 634.8,832.3 633.0,833.5C631.2,834.7 627.8,836.2 626.0,836.0C624.2,835.8 622.8,834.3 622.0,832.5C621.2,830.7 621.4,826.9 621.0,825.0C620.6,823.1 619.2,822.5 619.5,821.0C619.8,819.5 622.0,816.8 622.5,816.0Z" fill="#c1c1c1" stroke="#000" stroke-width="2.04" stroke-linejoin="round" stroke-linecap="round"/>
<path d="M624.5,863.0C625.2,862.7 627.6,860.9 629.0,861.0C630.4,861.1 632.3,862.2 633.0,863.5C633.7,864.8 633.0,868.1 633.0,869.0" fill="none" stroke="#000" stroke-width="1.68" stroke-linejoin="round" stroke-linecap="round"/>
<path d="M703.5,815.5C704.0,814.9 705.7,812.1 706.5,812.0C707.3,811.9 708.2,814.5 708.5,815.0" fill="none" stroke="#000" stroke-width="1.56" stroke-linejoin="round" stroke-linecap="round"/>
<path d="M720.5,757.0C720.8,756.2 721.5,753.0 722.5,752.5C723.5,752.0 725.8,753.8 726.5,754.0" fill="none" stroke="#000" stroke-width="1.56" stroke-linejoin="round" stroke-linecap="round"/>
<path d="M507.5,695.0C508.2,695.5 510.8,696.8 512.0,698.0C513.2,699.2 514.7,700.7 514.5,702.0C514.3,703.3 512.1,705.2 511.0,706.0C509.9,706.8 508.5,706.8 508.0,707.0" fill="none" stroke="#000" stroke-width="1.56" stroke-linejoin="round" stroke-linecap="round"/>
<path d="M590.2,637.0C590.0,637.6 588.7,639.3 589.0,640.5C589.3,641.7 590.7,643.0 592.0,644.0C593.3,645.0 595.6,647.0 597.0,646.5C598.4,646.0 599.7,642.2 600.2,641.3" fill="none" stroke="#000" stroke-width="1.56" stroke-linejoin="round" stroke-linecap="round"/>
<path d="M594.1,705.4C595.0,704.9 597.5,702.8 599.8,702.1C602.1,701.4 606.6,701.2 608.0,701.0C609.9,702.7 615.4,706.7 619.5,711.1C623.6,715.5 628.8,722.6 632.6,727.5C636.4,732.4 640.2,737.3 642.4,740.6C644.6,743.9 645.3,744.9 645.7,747.1C646.1,749.3 645.6,752.1 644.9,753.7C644.2,755.4 642.4,755.8 641.6,757.0C640.8,758.2 640.2,760.4 639.9,761.1C639.2,760.4 638.1,759.6 635.8,757.0C633.5,754.4 629.8,750.4 626.0,745.5C622.2,740.6 617.3,733.0 612.9,727.5C608.5,722.0 602.9,716.5 599.8,712.8C596.7,709.1 595.0,706.6 594.1,705.4Z" fill="#c1c1c1" stroke="#000" stroke-width="2.04" stroke-linejoin="round" stroke-linecap="round"/>
<path d="M517.9,729.1C521.6,732.7 532.1,742.7 540.0,750.5C547.9,758.3 556.7,767.4 565.0,776.0C573.3,784.6 581.2,792.6 590.0,802.0C598.8,811.4 613.2,827.2 617.8,832.3" fill="none" stroke="#000" stroke-width="1.8" stroke-linejoin="round" stroke-linecap="round"/>
<path d="M520.0,737.0C523.3,740.3 532.5,749.4 540.0,757.0C547.5,764.6 556.7,774.0 565.0,782.5C573.3,791.0 581.7,799.1 590.0,808.0C598.3,816.9 610.8,831.3 615.0,836.0" fill="none" stroke="#000" stroke-width="1.32" stroke-linejoin="round" stroke-linecap="round"/>
<path d="M517.9,729.1C518.8,732.9 521.0,743.7 523.0,752.0C525.0,760.3 529.0,774.5 530.2,779.0" fill="none" stroke="#000" stroke-width="1.68" stroke-linejoin="round" stroke-linecap="round"/>
<path d="M524.5,738.1C525.3,737.0 531.3,742.5 532.7,745.5C534.1,748.5 533.5,755.1 532.7,756.2C531.9,757.3 529.2,755.1 527.8,752.1C526.4,749.1 523.7,739.2 524.5,738.1Z" fill="#555" stroke="#000" stroke-width="1.32" stroke-linejoin="round" stroke-linecap="round"/>
<ellipse cx="522" cy="723.4" rx="2.6" ry="3.3" transform="rotate(-40 522 723.4)" fill="#444" stroke="#000" stroke-width="1.3"/>
<ellipse cx="531.8" cy="731.6" rx="2.6" ry="3.3" transform="rotate(-40 531.8 731.6)" fill="#444" stroke="#000" stroke-width="1.3"/>
<ellipse cx="545" cy="744.7" rx="2.6" ry="3.3" transform="rotate(-40 545 744.7)" fill="#444" stroke="#000" stroke-width="1.3"/>
<ellipse cx="552.3" cy="752.9" rx="2.6" ry="3.3" transform="rotate(-40 552.3 752.9)" fill="#444" stroke="#000" stroke-width="1.3"/>
<ellipse cx="560.5" cy="760.3" rx="2.6" ry="3.3" transform="rotate(-40 560.5 760.3)" fill="#444" stroke="#000" stroke-width="1.3"/>
<ellipse cx="568.7" cy="769.3" rx="2.6" ry="3.3" transform="rotate(-40 568.7 769.3)" fill="#444" stroke="#000" stroke-width="1.3"/>
<ellipse cx="577.7" cy="778.3" rx="2.6" ry="3.3" transform="rotate(-40 577.7 778.3)" fill="#444" stroke="#000" stroke-width="1.3"/>
<path d="M531.0,781.0C535.8,785.8 550.2,800.2 560.0,810.0C569.8,819.8 581.3,831.2 590.0,840.0C598.7,848.8 608.3,859.2 612.0,863.0" fill="none" stroke="#000" stroke-width="1.32" stroke-linejoin="round" stroke-linecap="round"/>
<path d="M318.7,634.4C318.4,636.2 317.4,640.7 317.2,645.0C317.0,649.3 316.9,654.8 317.5,660.0C318.1,665.2 319.3,671.0 321.0,676.0C322.7,681.0 324.9,685.2 327.6,690.0C330.3,694.8 333.3,700.0 337.0,705.0C340.7,710.0 345.3,715.2 350.0,720.0C354.7,724.8 359.6,729.4 365.0,734.0C370.4,738.6 376.9,742.7 382.7,747.7C388.5,752.7 394.2,758.6 400.0,764.0C405.8,769.4 412.9,775.5 417.7,780.3C422.5,785.1 425.6,788.8 429.0,793.0C432.4,797.2 435.6,801.5 437.8,805.3C440.1,809.1 441.5,812.2 442.5,816.0C443.5,819.8 443.7,824.2 444.0,827.9C444.3,831.6 444.5,834.7 444.3,838.0C444.1,841.3 443.7,844.2 442.8,847.9C441.9,851.6 440.7,856.2 439.0,860.0C437.3,863.8 435.3,867.2 432.8,870.5C430.3,873.8 427.4,877.3 424.0,880.0C420.6,882.7 416.0,885.2 412.7,886.7C409.4,888.2 406.9,888.6 404.0,889.0C401.1,889.4 398.0,889.7 395.2,889.2C392.4,888.7 389.5,887.5 387.0,886.0C384.5,884.5 381.9,882.7 380.2,880.5C378.4,878.3 377.1,875.5 376.5,873.0C375.9,870.5 376.1,868.1 376.4,865.4C376.6,862.6 376.9,859.4 378.0,856.5C379.1,853.6 380.4,850.6 382.7,847.9C385.0,845.1 388.2,842.3 392.0,840.0C395.8,837.7 400.5,835.8 405.2,834.1C409.9,832.4 415.0,831.0 420.0,830.0C425.0,829.0 430.6,827.9 435.3,827.9C440.0,827.9 443.8,828.8 448.0,830.0C452.2,831.2 456.1,833.0 460.3,835.4C464.5,837.8 468.8,841.2 473.0,844.5C477.2,847.8 480.9,852.0 485.4,855.4C489.9,858.8 495.0,862.1 500.0,865.0C505.0,867.9 510.7,871.1 515.4,873.0C520.1,874.9 523.8,875.7 528.0,876.5C532.2,877.3 536.7,877.8 540.5,878.0C544.3,878.2 547.8,877.9 551.0,877.5C554.2,877.1 557.2,876.8 560.0,875.5C562.8,874.2 565.7,872.2 568.0,870.0C570.3,867.8 572.6,864.8 574.0,862.0C575.4,859.2 576.3,855.8 576.5,853.0C576.7,850.2 576.5,848.5 575.2,845.5C574.0,842.5 571.5,838.4 569.0,835.0C566.5,831.6 564.3,829.6 560.0,825.4C555.7,821.2 548.4,815.0 543.0,810.0C537.6,805.0 532.1,800.7 527.6,795.4C523.1,790.1 519.1,783.9 516.0,778.0C512.9,772.1 510.4,765.0 508.8,760.3C507.2,755.6 506.7,753.4 506.5,750.0C506.3,746.6 506.7,743.7 507.5,740.2C508.3,736.7 509.8,732.3 511.5,729.0C513.2,725.7 516.6,721.7 517.6,720.2" fill="none" stroke="#000" stroke-width="1.8" stroke-linejoin="round" stroke-linecap="round"/>
<path d="M515.5,720.5C514.7,722.5 512.1,728.8 510.6,732.4C509.1,736.0 507.3,739.1 506.5,742.0C505.7,744.9 505.5,746.1 505.6,750.0C505.7,753.9 505.5,760.0 507.3,765.2C509.1,770.5 512.1,776.0 516.3,781.5C520.5,787.0 526.4,792.2 532.7,797.9C539.0,803.6 548.0,809.9 554.0,815.9C560.0,821.9 566.2,831.0 568.7,834.0" fill="none" stroke="#000" stroke-width="5.52" stroke-linejoin="round" stroke-linecap="round"/>
<path d="M515.5,720.5C514.7,722.5 512.1,728.8 510.6,732.4C509.1,736.0 507.3,739.1 506.5,742.0C505.7,744.9 505.5,746.1 505.6,750.0C505.7,753.9 505.5,760.0 507.3,765.2C509.1,770.5 512.1,776.0 516.3,781.5C520.5,787.0 526.4,792.2 532.7,797.9C539.0,803.6 548.0,809.9 554.0,815.9C560.0,821.9 566.2,831.0 568.7,834.0" fill="none" stroke="#c1c1c1" stroke-width="2.16" stroke-linejoin="round" stroke-linecap="round"/>
<path d="M513.5,718.5C515.0,717.2 518.3,719.4 518.5,721.5C518.7,723.6 516.0,729.7 514.5,731.0C513.0,732.3 509.7,731.6 509.5,729.5C509.3,727.4 512.0,719.8 513.5,718.5Z" fill="#c1c1c1" stroke="#000" stroke-width="1.56" stroke-linejoin="round" stroke-linecap="round"/>
<path d="M318.7,634.4C318.3,635.5 317.0,638.4 316.5,641.0C316.0,643.6 315.7,648.5 315.5,650.0" fill="none" stroke="#000" stroke-width="1.44" stroke-linejoin="round" stroke-linecap="round"/>
<path d="M733.8,731.3C735.7,730.8 741.5,728.6 745.0,728.0C748.5,727.4 751.7,727.0 755.0,727.5C758.3,728.0 762.1,729.3 765.0,731.0C767.9,732.7 770.7,735.1 772.6,737.6C774.5,740.1 775.7,743.1 776.5,746.0C777.3,748.9 777.9,751.0 777.6,755.0C777.4,759.0 776.3,764.5 775.0,770.0C773.7,775.5 771.7,781.7 770.0,787.7C768.3,793.7 766.7,799.7 765.0,806.0C763.3,812.3 760.9,819.5 760.0,825.3C759.1,831.1 759.1,836.0 759.5,841.0C759.9,846.0 761.3,850.8 762.6,855.3C763.9,859.8 765.4,864.2 767.5,868.0C769.6,871.8 772.2,875.5 775.0,877.9C777.8,880.3 780.6,881.5 784.0,882.5C787.4,883.5 790.9,884.2 795.2,884.0C799.5,883.8 805.0,882.4 810.0,881.0C815.0,879.6 819.4,877.9 825.2,875.4C831.0,872.9 838.3,869.4 845.0,866.0C851.7,862.6 858.6,859.0 865.3,855.3C872.0,851.6 878.3,847.8 885.0,844.0C891.7,840.2 899.6,835.7 905.4,832.8C911.2,829.9 915.0,828.2 920.0,826.5C925.0,824.8 930.5,823.5 935.5,822.7C940.5,821.9 944.6,821.7 950.0,821.5C955.4,821.3 965.0,821.5 968.0,821.5" fill="none" stroke="#000" stroke-width="7.44" stroke-linejoin="round" stroke-linecap="round"/>
<path d="M733.8,731.3C735.7,730.8 741.5,728.6 745.0,728.0C748.5,727.4 751.7,727.0 755.0,727.5C758.3,728.0 762.1,729.3 765.0,731.0C767.9,732.7 770.7,735.1 772.6,737.6C774.5,740.1 775.7,743.1 776.5,746.0C777.3,748.9 777.9,751.0 777.6,755.0C777.4,759.0 776.3,764.5 775.0,770.0C773.7,775.5 771.7,781.7 770.0,787.7C768.3,793.7 766.7,799.7 765.0,806.0C763.3,812.3 760.9,819.5 760.0,825.3C759.1,831.1 759.1,836.0 759.5,841.0C759.9,846.0 761.3,850.8 762.6,855.3C763.9,859.8 765.4,864.2 767.5,868.0C769.6,871.8 772.2,875.5 775.0,877.9C777.8,880.3 780.6,881.5 784.0,882.5C787.4,883.5 790.9,884.2 795.2,884.0C799.5,883.8 805.0,882.4 810.0,881.0C815.0,879.6 819.4,877.9 825.2,875.4C831.0,872.9 838.3,869.4 845.0,866.0C851.7,862.6 858.6,859.0 865.3,855.3C872.0,851.6 878.3,847.8 885.0,844.0C891.7,840.2 899.6,835.7 905.4,832.8C911.2,829.9 915.0,828.2 920.0,826.5C925.0,824.8 930.5,823.5 935.5,822.7C940.5,821.9 944.6,821.7 950.0,821.5C955.4,821.3 965.0,821.5 968.0,821.5" fill="none" stroke="#c1c1c1" stroke-width="3.6" stroke-linejoin="round" stroke-linecap="round"/>
<path d="M710.4,732.7C711.0,732.0 712.1,729.5 714.0,728.5C715.9,727.5 719.7,726.8 722.0,727.0C724.3,727.2 726.2,729.7 728.0,730.0C729.8,730.3 732.2,729.2 733.0,729.0L735.5,733.5C734.8,734.0 732.4,735.1 731.0,736.5C729.6,737.9 728.2,739.6 727.0,742.0C725.8,744.4 724.8,749.3 724.0,751.0C723.2,752.7 722.3,751.8 722.0,752.0" fill="#c1c1c1" stroke="#000" stroke-width="1.8" stroke-linejoin="round" stroke-linecap="round"/></g></svg>
<div class="a" id="menubar"><span style="left:11px">Layer</span><span style="left:60px">Select</span><span style="left:113px">View</span><span style="left:160px">Filter</span><span style="left:207px">Window</span><span style="left:272px">Help</span></div>
<div class="a" id="toolbar"></div>
<div class="a" style="left:0;top:15px;width:64.6px;height:25px;background:#383838"></div>
<div class="a" style="left:431px;top:15px;width:48px;height:24px;background:#67718c;border-radius:3px"></div>
<svg class="a" style="left:0;top:14px" width="1069" height="26" viewBox="0 14 1069 26" fill="none" stroke="#d4d4d4" stroke-width="1.4" stroke-linecap="round" stroke-linejoin="round">
<g stroke="#8a8a8a" stroke-width="1"><path d="M55.5,19v11M57.5,19v11M59.5,19v11"/><path d="M992.5,18v11M994.5,18v11M996.5,18v11"/></g>
<g stroke="#666" stroke-width="1"><path d="M93.5,17v20M187.5,17v20M243.5,17v20M347.5,17v20M427.5,17v20M507.500,17v20M539,17v20"/></g>
<rect x="67.5" y="17.5" width="19" height="18.5" rx="2" fill="#5c5c5c" stroke="#cfcfcf" stroke-width="1.2"/>
<path d="M82,26c0-3-3-4.500-6-4-3,.5-5,3-4.500,6 .5,3 4,4 6.500,3 2-1 3-3.500 1-5-1.500-1-4-.5-4.500,1.500-.3,1.500 1.500,2 2.500,1" stroke-width="1.3"/>
<path d="M103,19h11v10M103,19v15h7" /><circle cx="114.500" cy="32" r="3.800" fill="#4c4c4c"/><path d="M112.500,32h4M114.500,30v4" stroke-width="1.1"/>
<path d="M125.500,34v-14h6l1.500,2h6v3" /><path d="M125.500,34l3.500-8h14l-3.500,8z" fill="#d4d4d4"/><path d="M137,18h4v3" stroke-width="1.2"/>
<path d="M149,34l2.500-7h11l2.500,7z"/><path d="M149,34h16" stroke-width="2"/><path d="M157,18v9M153.500,23.500l3.500,3.500 3.500-3.500" />
<path d="M173,25l3.500,3.500 3.500-3.500" stroke="#bdbdbd"/>
<path d="M196,24h9.500a4.500,4.500 0 0 1 0,9h-8M200,20l-4.500,4 4.500,4"/>
<path d="M234,24h-9.500a4.500,4.500 0 0 0 0,9h8M230,20l4.500,4-4.500,4" stroke="#707070"/>
<path d="M264.0,26.5L267.8,26.5M263.3,29.0L266.6,30.9M261.5,30.8L263.4,34.1M259.0,31.5L259.0,35.3M256.5,30.8L254.6,34.1M254.7,29.0L251.4,30.9M254.0,26.5L250.2,26.5M254.7,24.0L251.4,22.1M256.5,22.2L254.6,18.9M259.0,21.5L259.0,17.7M261.5,22.2L263.4,18.9M263.3,24.0L266.6,22.1" stroke-width="1.600" stroke="#cfcfcf"/>
<g stroke="#6e6e6e" stroke-width="1.2"><rect x="276" y="19" width="12" height="11" stroke-dasharray="2 1.500"/><rect x="281" y="24" width="11" height="10" fill="#5e5e5e"/></g>
<path d="M299,28l8.500-8.500 8.500,8.500-8.500,7z" fill="#d4d4d4"/><path d="M307.500,19.500l3-2.500M316.500,29.500q2,3 0,4.500-2-1.500 0-4.500z" fill="#d4d4d4"/>
<rect x="324.500" y="20.500" width="13" height="13" stroke-width="1.200"/><g fill="#d4d4d4" stroke="none"><rect x="323" y="25.500" width="3" height="3"/><rect x="336" y="25.500" width="3" height="3"/><rect x="329.500" y="32" width="3" height="3"/><rect x="329.500" y="19" width="3" height="3"/><rect x="329.500" y="15.500" width="3" height="3"/></g>
<g stroke="#6a6a6a" stroke-width="1.1"><rect x="355" y="19" width="16" height="15" stroke-dasharray="2 1.500"/><path d="M355,19l16,15"/><rect x="379.500" y="19" width="16" height="15" stroke-dasharray="2 1.500"/><path d="M395.500,19v15h-16z" fill="#6a6a6a"/><rect x="403" y="19" width="16" height="15"/><rect x="406" y="22" width="10" height="9"/></g>
<g stroke="#dfe3ee"><path d="M435.500,20v14.500h12.500z" stroke-width="1.300"/><path d="M452,18.500l-8.500,8.500" stroke-width="2.200"/><path d="M458.500,27.700a8.700,8.400 0 0 0 17.400,0z" stroke-width="1.300"/><path d="M475.500,19l-7.500,7" stroke-width="2.200"/></g>
<g stroke="#d0d0d0"><path d="M485.500,20.500v13h14.500M485.500,27.700h9v5.600" stroke-width="1.100"/><path d="M499,19l-7,7" stroke-width="2.200"/></g>
<rect x="517.800" y="17.500" width="11.500" height="18.500" rx="1.500" stroke="#d4d4d4" stroke-width="1.300"/><path d="M518,34.800h11" stroke="#d4d4d4" stroke-width="2.200"/><g fill="#d4d4d4" stroke="none"><rect x="520" y="20" width="1.700" height="1.700"/><rect x="522.800" y="20" width="1.700" height="1.700"/><rect x="525.600" y="20" width="1.700" height="1.700"/><rect x="520" y="23" width="1.700" height="1.700"/><rect x="522.800" y="23" width="1.700" height="1.700"/><rect x="520" y="26" width="1.700" height="1.700"/><rect x="522.800" y="26" width="1.700" height="1.700"/><rect x="525.600" y="26" width="1.700" height="1.700"/><rect x="520" y="29" width="1.700" height="1.700"/></g>
<path d="M548.500,35l1.800-3.600a7.300,7.300 0 1 1 3,2.100z" stroke="#c8c8c8" stroke-width="1.300"/><path d="M552.300,23.300a2.700,2.700 0 1 1 4,2.400c-1,.6-1.200,1.100-1.200,2.300" stroke="#d8d8d8" stroke-width="1.700"/><circle cx="555.100" cy="30.600" r="1.100" fill="#d8d8d8" stroke="none"/><path d="M560,21l4.300-3M561.300,17.600l3.200.2-.2,3.200" stroke="#c8c8c8" stroke-width="1.200"/>
<path d="M984,19.500l-3.500,4 3.500,4M988,19.500l-3.500,4 3.500,4" stroke="#8e8e8e" stroke-width="1.2"/>
</svg>
<div class="a" id="tabrow"><div class="tab" style="left:0;width:100px;background:#626f8b;color:#e6e6e6">Zanka Bass2*<i style="position:absolute;left:87px;top:8px;width:5px;height:5px;border-radius:3px;background:#c8ccd6"></i></div><div class="tab" style="left:100px;width:99px;background:#4b4b4b;color:#b4b4b4">Zanka Bass*<i style="position:absolute;left:87px;top:8px;width:5px;height:5px;border-radius:3px;background:#c4c4c4"></i></div>
<svg class="a" style="left:895px;top:5px" width="12" height="10"><path d="M2,2.500l3.500,3.500 3.500-3.500" fill="none" stroke="#ccc" stroke-width="1.400"/></svg></div>

<div class="a" id="left">
<div class="a" style="left:0;top:0;width:63px;height:11.6px;background:#383838"></div>
<div class="a" style="left:0;top:11.6px;width:63px;height:5.6px;background:#4e4e4e"></div>
<div class="a" style="left:0;top:17.2px;width:63px;height:1.2px;background:#2c2c2c"></div>
<div class="a" style="left:0;top:18.4px;width:63px;height:29px;background:#4b4b4b"></div>
<!-- subtool list: y 88..350 abs => top 48 rel -->
<div class="a" style="left:0;top:47px;width:63px;height:264px;background:#3d3d3d"></div>
<div class="it" style="top:49px;background:#5a6b8c"><span style="background:#6f7fa3;padding:1px 2px 1px 2px">G-pen</span></div>
<div class="it" style="top:73px">Real G-Pen</div>
<div class="it" style="top:97px">Mapping pen</div>
<div class="it" style="top:121px">Turnip pen</div>
<div class="it" style="top:145px">Textured pen</div>
<div class="it" style="top:169px">Rough pen</div>
<div class="it" style="top:193px">Calligraphy</div>
<div class="it" style="top:217px">Milli pen</div>
<div class="it" style="top:241px">Felt pen</div>
<div class="it" style="top:265px">Dot pen</div>
<div class="it" style="top:289px;height:21px">Flat marker</div>
<div class="a" style="left:50px;top:47px;width:12px;height:264px;background:#4a4a4a"></div>
<div class="a" style="left:51px;top:59px;width:10px;height:203px;background:#6a6a6a;border-radius:3px"></div>
<div class="a" style="left:50px;top:47px;width:12px;height:11px;background:#5c5c5c"></div>
<div class="a" style="left:50px;top:297px;width:12px;height:13px;background:#5c5c5c"></div>
<svg class="a" style="left:0;top:0" width="63" height="998" viewBox="0 40 63 998" fill="none" stroke="#d0d0d0" stroke-width="1.2" stroke-linecap="round" stroke-linejoin="round">
<path d="M53,94l3-3 3,3M53,341l3,3 3-3"/>
<!-- bottom icons of subtool -->
<rect x="8" y="354" width="10" height="10" rx="1.500"/><path d="M13,355.500v5M10.800,358.500l2.200,2.200 2.200-2.200"/>
<rect x="27" y="353" width="8" height="8" rx="1"/><rect x="30" y="356" width="8" height="8" rx="1" fill="#4a4a4a"/><path d="M34,358v4M32,360h4" stroke-width="1"/>
<path d="M48,355.500h10M51,355.500v-1.500h4v1.500M49.500,355.500l.6,9h6l.6-9M52,358v4.500M54.500,358v4.500"/>
</svg>
<!-- tool property -->
<div class="a" style="left:0;top:330px;width:63px;height:18px;background:#3a3a3a"></div>
<div class="a" style="left:0;top:348px;width:63px;height:7px;background:#4e4e4e"></div>
<div class="a" style="left:0;top:355px;width:62px;height:37px;background:#4f4f4f"></div>
<div class="a" style="left:0;top:392px;width:48px;height:243px;background:#454545"></div>
<div class="a" style="left:48px;top:392px;width:15px;height:243px;background:#4b4b4b"></div>
<div class="a" style="left:0;top:635px;width:63px;height:20px;background:#525252"></div>
<svg class="a" style="left:0;top:0" width="63" height="998" viewBox="0 40 63 998" fill="none" stroke="#d0d0d0" stroke-width="1.200" stroke-linecap="round" stroke-linejoin="round">
<path d="M0,427C14,423 28,413 38,403.500C28,416 12,428 0,431z" fill="#fff" stroke="none"/>
<path d="M45.500,421v-2.500a2.300,2.300 0 0 1 4.600,0" stroke="#ddd" stroke-width="1.300"/><rect x="48.500" y="420.500" width="6.500" height="6" rx="1" fill="#ddd" stroke="none"/>
<g stroke="#cfcfcf" stroke-width="1.100"><path d="M20.500,446.500l3-3.500 3,3.500M20.500,452.500l3,3.500 3-3.500M20.500,481.500l3-3.500 3,3.500M20.500,487.500l3,3.500 3-3.500M20.500,550l3-3.500 3,3.500M20.500,556l3,3.500 3-3.500"/></g>
<rect x="32.500" y="437.500" width="14" height="22" rx="1.500" fill="#5a5a5a" stroke="#787878" stroke-width="1"/><path d="M36,445l3.500,3.200 3.500-3.200M36,449.500l3.500,3.200 3.500-3.200" stroke="#ddd" stroke-width="1.200"/>
<rect x="32.500" y="472.500" width="14" height="22" rx="1.500" fill="#5a5a5a" stroke="#787878" stroke-width="1"/><rect x="36" y="480" width="7" height="7" rx="1" stroke="#ddd"/><path d="M37,486l5-5" stroke="#ddd" stroke-width="1"/>
<g stroke="#5e5e5e" stroke-width="1"><path d="M0,465.500h46M0,501.500h46M0,536.500h46M0,594.500h46"/></g>
<rect x="-1" y="507.500" width="12" height="23" fill="#5b7dcc" stroke="none"/><circle cx="0" cy="519" r="5" fill="#b9bfd0" stroke="none"/>
<rect x="11.500" y="507.500" width="35" height="23" rx="1.500" fill="#565656" stroke="#6e6e6e" stroke-width="1"/><circle cx="21.500" cy="519" r="6" fill="#8a8a8a" stroke="none"/><circle cx="21.500" cy="519" r="3" fill="#b0b0b0" stroke="none"/>
<path d="M36,517l3.500,3.500 3.500-3.500" stroke="#d4d4d4" stroke-width="1.300"/>
<g stroke="#2e2e2e" stroke-width="1" fill="#464646"><rect x="-8.500" y="601.500" width="18" height="17"/><rect x="11.500" y="601.500" width="19" height="17"/></g><rect x="31" y="601" width="16" height="18" fill="#4c4c4c" stroke="none"/>
<path d="M36.500,606l3.500,4-3.500,4" stroke="#686868" stroke-width="1.300"/>
<circle cx="33" cy="686" r="6" stroke="#c8c8c8"/><path d="M33,686v-7M28.500,679.500l1.500,1.500" stroke="#c8c8c8"/><circle cx="33" cy="686" r="1.200" fill="#c8c8c8"/>
<path d="M47,682a3.500,3.500 0 0 1 5-2.500l-2.500,2.500 1.500,2 3-2a3.500,3.500 0 0 1-4.500,4l5,5.500a1.500,1.500 0 0 0 2-2l-5.500-5" stroke="#d0d0d0" stroke-width="1.200"/>
</svg>
<div class="a" style="left:0;top:399px;width:19px;height:22px;line-height:22px;font-size:12px;color:#dedede;text-align:right;white-space:nowrap;overflow:hidden;direction:rtl"><span style="direction:ltr;unicode-bidi:bidi-override">74.9</span></div>
<div class="a" style="left:0;top:434px;width:19px;height:22px;line-height:22px;font-size:12px;color:#dedede;text-align:right">100</div>
<div class="a" style="left:0;top:503px;width:19px;height:22px;line-height:22px;font-size:12px;color:#dedede;text-align:right">5</div>
<!-- brush size -->
<div class="a" style="left:0;top:655px;width:63px;height:17px;background:#3a3a3a"></div>
<div class="a" style="left:0;top:672px;width:63px;height:9px;background:#4a4a4a"></div>
<div class="a" style="left:0;top:681px;width:50px;height:88px;background:#2e2e2e;margin-top:0"></div>
<div class="a" style="left:-22px;top:682px;width:38px;height:38px;background:#404040"></div><div class="a" style="left:17px;top:682px;width:32px;height:38px;background:#404040"></div>
<div class="a" style="left:-22px;top:721px;width:38px;height:39px;background:#404040"></div><div class="a" style="left:17px;top:721px;width:32px;height:39px;background:#404040"></div>
<div class="a" style="left:-22px;top:761px;width:38px;height:8px;background:#404040"></div><div class="a" style="left:17px;top:761px;width:32px;height:8px;background:#404040"></div>
<div class="a" style="left:50px;top:681px;width:12px;height:88px;background:#4a4a4a"></div>
<div class="a" style="left:50px;top:681px;width:12px;height:11px;background:#5c5c5c"></div>
<div class="a" style="left:51px;top:693px;width:10px;height:21px;background:#6a6a6a;border-radius:3px"></div>
<div class="a" style="left:50px;top:757px;width:12px;height:12px;background:#5c5c5c"></div>
<div class="a" style="left:-3px;top:704px;width:12px;font-size:12px;color:#dedede">3</div><div class="a" style="left:29px;top:704px;font-size:12px;color:#dedede">4</div>
<div class="a" style="left:-4px;top:744px;font-size:12px;color:#dedede">10</div><div class="a" style="left:26px;top:744px;font-size:12px;color:#dedede">12</div>
<svg class="a" style="left:0;top:0" width="63" height="998" viewBox="0 40 63 998" fill="none" stroke="#d0d0d0" stroke-width="1.2" stroke-linecap="round" stroke-linejoin="round">
<circle cx="33" cy="736.500" r="1" fill="#fff" stroke="none"/><circle cx="0" cy="736.500" r="1" fill="#fff" stroke="none"/>
<circle cx="33" cy="776.500" r="5" fill="#fff" stroke="none"/><circle cx="0" cy="776.500" r="4" fill="#fff" stroke="none"/>
<path d="M25,809a8,6 0 0 1 16,0zM-8,809a8,5 0 0 1 16,0z" fill="#fff" stroke="none"/>
<path d="M53,728l3-3 3,3M53,799l3,3 3-3"/>
</svg>
<!-- color panel tabs -->
<div class="a" style="left:0;top:769px;width:63px;height:4px;background:#3a3a3a"></div>
<div class="a" style="left:0;top:773px;width:63px;height:17px;background:#4a4a4a"></div>
<div class="a" style="left:0;top:773px;width:2px;height:17px;background:#5a5a5a"></div>
<div class="a" style="left:4px;top:773px;width:27px;height:17px;background:#505050;border-left:1px solid #3a3a3a;border-right:1px solid #3a3a3a"></div>
<div class="a" style="left:33px;top:773px;width:30px;height:17px;background:#505050;border-right:1px solid #3a3a3a"></div>
<div class="a" style="left:0;top:790px;width:63px;height:208px;background:#4d4d4d"></div>
<svg class="a" style="left:0;top:0" width="63" height="998" viewBox="0 40 63 998" fill="none" stroke="#8c8c8c" stroke-width="1.1" stroke-linecap="round" stroke-linejoin="round">
<path d="M12,829v-6h12v6M14,823v-2.500h12v5"/>
<path d="M42,819.500h5v4h-5zM51,819.500h5v4h-5zM44.500,823.500v4M53.500,823.500v4M42,827.500h14M47,821.500h4"/>
<defs><linearGradient id="wg" gradientUnits="userSpaceOnUse" x1="0" y1="850" x2="0" y2="1006"><stop offset="0" stop-color="#38e000"/><stop offset=".2" stop-color="#00e000"/><stop offset=".48" stop-color="#00e650"/><stop offset=".68" stop-color="#00e2a8"/><stop offset=".82" stop-color="#00d8ee"/><stop offset=".95" stop-color="#1090ff"/><stop offset="1" stop-color="#2070ff"/></linearGradient></defs>
<circle cx="-62" cy="928" r="88.800" stroke="url(#wg)" stroke-width="15.500"/>
<path d="M0,921.300l12.400,7.700-12.400,7.500z" fill="#ff0000" stroke="none"/>
<circle cx="50" cy="1027" r="6" stroke="#c4c4c4"/><rect x="46.500" y="1023.500" width="7" height="7" rx="1" stroke="#c4c4c4"/>
<rect x="3.500" y="1026.500" width="7" height="6" rx="1" stroke="#c4c4c4"/><path d="M5.500,1029.500h3" stroke="#c4c4c4"/>
</svg>
<div class="a" style="left:23px;top:984px;font-size:12px;color:#dedede">0</div>
</div>

<div class="a" style="left:972.5px;top:38px;width:97px;height:1000px;background:#383838;"></div>
<div class="a" style="left:988px;top:38px;width:81px;height:14px;background:#3a3a3a;"></div>
<div class="a" style="left:1007px;top:38px;width:62px;height:14px;background:#4d4d4d;"></div>
<div class="a" style="left:988px;top:52px;width:81px;height:5.5px;background:#4d4d4d;"></div>
<div class="a" style="left:988px;top:57.5px;width:22px;height:182.5px;background:#2f2f2f;"></div>
<div class="a" style="left:1000.5px;top:57.5px;width:1.6px;height:182.5px;background:#b41a1a;"></div>
<div class="a" style="left:1010px;top:57.5px;width:59px;height:182.5px;background:#fff;"></div>
<div class="a" style="left:988px;top:240px;width:81px;height:44px;background:#4c4c4c;"></div>
<div class="a" style="left:993px;top:247.5px;width:71px;height:13px;background:#333;border:1px solid #6a6a6a"></div>
<div class="a" style="left:993px;top:266.5px;width:71px;height:13px;background:#333;border:1px solid #6a6a6a"></div>
<div class="a" style="left:988px;top:288px;width:81px;height:15px;background:#3c3c3c;"></div>
<div class="a" style="left:1007px;top:288px;width:29px;height:15px;background:#505050;"></div>
<div class="a" style="left:1037px;top:288px;width:32px;height:15px;background:#4a4a4a;"></div>
<div class="a" style="left:988px;top:303px;width:81px;height:50px;background:#4a4a4a;"></div>
<div class="a" style="left:990px;top:308px;width:84px;height:19px;background:#5c5c5c;border:1px solid #727272;border-radius:3px"></div>
<div class="a" style="left:990px;top:333px;width:84px;height:19px;background:#5a5a5a;border:1px solid #707070;border-radius:3px"></div>
<div class="a" style="left:988px;top:352px;width:81px;height:27px;background:#4d4d4d;"></div>
<div class="a" style="left:988px;top:379px;width:81px;height:28px;background:#3e3e3e;"></div>
<div class="a" style="left:1008px;top:379px;width:1px;height:28px;background:#2a2a2a;"></div>
<div class="a" style="left:1026.5px;top:379px;width:1px;height:28px;background:#2a2a2a;"></div>
<div class="a" style="left:1028px;top:380px;width:41px;height:27px;background:#5a6b8c;"></div>
<div class="a" style="left:1031px;top:382px;width:38px;height:25px;background:none;border:1px solid #e8e8f0"></div>
<div class="a" style="left:988px;top:407px;width:81px;height:5px;background:#333;"></div>
<div class="a" style="left:988px;top:412px;width:81px;height:19px;background:#3a3a3a;"></div>
<div class="a" style="left:1007px;top:412px;width:54px;height:19px;background:#4d4d4d;"></div>
<div class="a" style="left:988px;top:431px;width:81px;height:68px;background:#4a4a4a;"></div>
<div class="a" style="left:990px;top:432px;width:37px;height:20px;background:#5a5a5a;border:1px solid #707070;border-radius:3px"></div>
<div class="a" style="left:1031px;top:432px;width:44px;height:20px;background:#5a5a5a;border:1px solid #707070;border-radius:3px"></div>
<div class="a" style="left:988px;top:476px;width:20px;height:21px;background:#6a7fae;"></div>
<div class="a" style="left:988px;top:499px;width:81px;height:515px;background:#3d3d3d;"></div>
<div class="a" style="left:1008px;top:499px;width:1px;height:401px;background:#2a2a2a;"></div>
<div class="a" style="left:1026.5px;top:499px;width:1px;height:401px;background:#2a2a2a;"></div>
<div class="a" style="left:988px;top:540px;width:81px;height:1px;background:#2a2a2a;"></div>
<div class="a" style="left:988px;top:581px;width:81px;height:1px;background:#2a2a2a;"></div>
<div class="a" style="left:988px;top:611.5px;width:81px;height:1px;background:#2a2a2a;"></div>
<div class="a" style="left:988px;top:829px;width:81px;height:1px;background:#2a2a2a;"></div>
<div class="a" style="left:988px;top:860px;width:81px;height:1px;background:#2a2a2a;"></div>
<div class="a" style="left:988px;top:900px;width:81px;height:1px;background:#2a2a2a;"></div>
<div class="a" style="left:1027.5px;top:541px;width:42px;height:40px;background:#5a6b8c;"></div>
<div class="a" style="left:1031px;top:543px;width:38px;height:36px;background:none;border:1px solid #f0f0f4"></div>
<div class="a" style="left:1044px;top:612px;width:25px;height:1px;background:#2a2a2a;"></div>
<div class="a" style="left:1045px;top:615px;width:4px;height:25px;background:#e08282;border-radius:2px"></div>
<div class="a" style="left:1044px;top:643px;width:25px;height:1px;background:#2a2a2a;"></div>
<div class="a" style="left:1045px;top:646px;width:4px;height:25px;background:#e08282;border-radius:2px"></div>
<div class="a" style="left:1044px;top:674px;width:25px;height:1px;background:#2a2a2a;"></div>
<div class="a" style="left:1045px;top:677px;width:4px;height:25px;background:#e08282;border-radius:2px"></div>
<div class="a" style="left:1044px;top:705px;width:25px;height:1px;background:#2a2a2a;"></div>
<div class="a" style="left:1045px;top:708px;width:4px;height:25px;background:#e08282;border-radius:2px"></div>
<div class="a" style="left:1044px;top:736px;width:25px;height:1px;background:#2a2a2a;"></div>
<div class="a" style="left:1045px;top:739px;width:4px;height:25px;background:#e08282;border-radius:2px"></div>
<div class="a" style="left:1044px;top:767px;width:25px;height:1px;background:#2a2a2a;"></div>
<div class="a" style="left:1045px;top:770px;width:4px;height:25px;background:#e08282;border-radius:2px"></div>
<div class="a" style="left:1044px;top:798px;width:25px;height:1px;background:#2a2a2a;"></div>
<div class="a" style="left:1045px;top:801px;width:4px;height:25px;background:#e08282;border-radius:2px"></div>
<div class="a" style="left:1033.5px;top:864px;width:33.5px;height:33.5px;background:#fff;"></div>
<div class="a" style="left:988px;top:1014px;width:81px;height:4.5px;background:#4a4a4a;"></div>
<div class="a" style="left:988px;top:1018.5px;width:81px;height:20px;background:#3e3e3e;"></div>
<div class="a" style="left:1008px;top:1018.5px;width:1px;height:20px;background:#2a2a2a;"></div>
<div class="a" style="left:1026.5px;top:1018.5px;width:1px;height:20px;background:#2a2a2a;"></div>
<div class="a" style="left:1034px;top:39px;font-size:11px;color:#dcdcdc;white-space:nowrap;letter-spacing:-.2px">Navigator</div>
<div class="a" style="left:1061px;top:310px;font-size:12px;color:#e4e4e4;white-space:nowrap">All</div>
<div class="a" style="left:1023px;top:335.5px;font-size:11.5px;color:#8c8c8c;white-space:nowrap;letter-spacing:-.2px">Type search</div>
<div class="a" style="left:1035px;top:415px;font-size:11px;color:#dcdcdc;white-space:nowrap;letter-spacing:-.2px">Layer</div>
<div class="a" style="left:1043px;top:435px;font-size:12px;color:#dcdcdc;white-space:nowrap;letter-spacing:-.2px">Normal</div>
<div class="a" style="left:1064px;top:291px;font-size:11px;color:#dcdcdc;white-space:nowrap">S</div>
<svg class="a" style="left:969px;top:30px" width="100" height="1008" viewBox="969 30 100 1008" fill="none" stroke="#c8c8c8" stroke-width="1.2" stroke-linecap="round" stroke-linejoin="round">
<defs><pattern id="ck" x="1033.5" y="503.5" width="10.4" height="10.4" patternUnits="userSpaceOnUse"><rect width="10.4" height="10.4" fill="#fff"/><rect width="5.2" height="5.2" fill="#cdcdcd"/><rect x="5.2" y="5.2" width="5.2" height="5.2" fill="#cdcdcd"/></pattern><clipPath id="nv"><rect x="1010" y="57.5" width="59" height="182.5"/></clipPath>
<g id="eye"><path d="M-7,0.500C-4,-4 4,-4 7,0.500C4,4.500 -4,4.500 -7,0.500z" stroke="#d0d0d0" stroke-width="1.300"/><circle cx="0" cy="0.300" r="2.600" fill="#d0d0d0" stroke="none"/></g>
<g id="pen"><path d="M-5,4l1-3.500 7-6.500 2.500,2.500-7,6.500z" fill="#d0d0d0" stroke="#d0d0d0" stroke-width="1"/><path d="M-7,7h14" stroke="#d0d0d0" stroke-width="1.200"/></g>
<g id="cb"><rect x="-4.500" y="-4.500" width="9" height="9" rx="2" stroke="#303030" stroke-width="1.400"/></g>
<g id="ham" stroke="#8a8a8a" stroke-width="1"><path d="M-4,-3h8M-4,0h8M-4,3h8"/></g>
<g id="fold"><path d="M0,0h3.500l1.500,1.500h4.500v8h-9.500z" fill="#b8b8b8" stroke="none"/><path d="M0,4.500h9.500" stroke="#555" stroke-width=".8"/></g>
</defs>
<g clip-path="url(#nv)"><g transform="translate(1010 57.5) scale(0.2124) translate(-109 -115)"><use href="#artg"/></g></g>
<use href="#ham" x="997" y="45"/>
<use href="#ham" x="997" y="295.5"/>
<use href="#ham" x="997" y="421.5"/>
<rect x="1016" y="42" width="11" height="8" rx="1"/><rect x="1018" y="40.500" width="11" height="8" rx="1" fill="#8a8a8a"/>
<path d="M994,259.500l69-11v11z" fill="#2a2a2a" stroke="none"/><path d="M994,259.500v-11h69z" fill="#464646" stroke="none"/>
<path d="M994,267.500c14,0 14,11 24,11s18,-11 30,-11 15,4 15,4v7.500h-69z" fill="#2a2a2a" stroke="none"/>
<rect x="1016" y="244.500" width="4" height="19" fill="#8c8c8c" stroke="#5a5a5a" stroke-width=".8"/><rect x="1027.500" y="263.500" width="4" height="19" fill="#8c8c8c" stroke="#5a5a5a" stroke-width=".8"/>
<g stroke="#7e7e7e"><path d="M1015,297l6.500-4 6.500,4-6.500,4zM1015,300.500l3,2M1028,300.500l-3,2"/></g>
<g stroke="#d0d0d0"><path d="M1045,294l6.500-3.500 6.500,3.500-6.500,3.500zM1045,297.500l6.500,3.500 3-1.500M1045,301l6.500,3.500 2-1"/><path d="M1054.500,298.500h7l-2.700,3v3.500l-1.600-1v-2.500z" fill="#d0d0d0" stroke-width=".8"/></g>
<circle cx="1044" cy="312.5" r="1.300" fill="#b0b0b0" stroke="none"/>
<circle cx="1049" cy="312.5" r="1.300" fill="#b0b0b0" stroke="none"/>
<circle cx="1054" cy="312.5" r="1.300" fill="#b0b0b0" stroke="none"/>
<circle cx="1044" cy="317.5" r="1.300" fill="#b0b0b0" stroke="none"/>
<circle cx="1049" cy="317.5" r="1.300" fill="#b0b0b0" stroke="none"/>
<circle cx="1054" cy="317.5" r="1.300" fill="#b0b0b0" stroke="none"/>
<circle cx="1044" cy="322.5" r="1.300" fill="#b0b0b0" stroke="none"/>
<circle cx="1049" cy="322.5" r="1.300" fill="#b0b0b0" stroke="none"/>
<circle cx="1054" cy="322.5" r="1.300" fill="#b0b0b0" stroke="none"/>
<circle cx="1000" cy="342" r="5" stroke="#b4b4b4" stroke-width="2.200"/><circle cx="1000" cy="342" r="2" fill="#b4b4b4" stroke="none"/><path d="M1004,346l3.500,3.500" stroke="#b4b4b4" stroke-width="2.200"/><path d="M1011.500,341l3,3 3-3" stroke="#b4b4b4" stroke-width="1.300"/>
<use href="#eye" x="998" y="399"/><use href="#pen" x="1016" y="397"/>
<rect x="1033.500" y="384.500" width="33" height="23" fill="url(#ck)" stroke="#111" stroke-width="1"/>
<g stroke="#d0d0d0"><path d="M1014,418.500l6.500-3.500 6.500,3.500-6.500,3.500zM1014,422l6.500,3.500 6.500-3.500M1014,425.500l6.500,3.500 6.500-3.500"/></g>
<rect x="994" y="436" width="13" height="12" rx="2.500" stroke="#8e8e8e" stroke-width="1.300"/><path d="M1015.500,440.500l3.500,3.500 3.500-3.500" stroke="#b4b4b4" stroke-width="1.300"/>
<g stroke="#b4b4b4"><rect x="1010" y="457.500" width="10" height="9" stroke-dasharray="2 1.300"/><rect x="1007.500" y="461" width="9" height="8" rx="1" fill="#8a8a8a"/></g>
<g stroke="#cfcfcf"><path d="M1034,458v3M1030.500,459l2,1.500M1037.500,459l-2,1.500M1028,462.500h3M1037,462.500h3" stroke-width="1.100"/><path d="M1032.500,461.500h3l1.500,8h-6z" fill="#cfcfcf" stroke="none"/></g>
<g stroke="#cfcfcf"><path d="M1048.500,458h5v5.500l-2.500,2.500-2.500-2.500z" /><path d="M1051,466c0,3 2,4 4.500,3.500s3.500-2 5-1.500M1058.500,466l2.500,2-2.500,2" stroke-width="1.100"/></g>
<g stroke="#e8ecf6" stroke-width="1.100"><rect x="992.500" y="480.500" width="11" height="12" rx="1"/><path d="M992.500,484.500h11M992.500,488.500h11M994.500,482.500h1M994.500,486.500h1M994.500,490.500h1"/></g>
<path d="M1058.500,480.500h10.500M1058.500,480.500v9l3,3h7.500" stroke="#cfcfcf"/><circle cx="1068" cy="493" r="3" stroke="#cfcfcf"/>
<use href="#cb" x="998" y="520"/><use href="#cb" x="1017.500" y="520"/>
<rect x="1033.500" y="503.500" width="33.500" height="33" fill="url(#ck)" stroke="none"/>
<use href="#eye" x="998" y="560"/><use href="#pen" x="1016" y="559"/>
<rect x="1033.500" y="544.500" width="33.500" height="33" fill="url(#ck)" stroke="#111" stroke-width="1.300"/>
<g opacity=".55" transform="translate(1038.5 384.5) scale(0.027) translate(-109 -115)"><use href="#artg"/></g>
<g opacity=".55" transform="translate(1033.5 503.5) scale(0.039) translate(-109 -115)"><use href="#artg"/></g>
<g opacity=".55" transform="translate(1033.5 544.5) scale(0.039) translate(-109 -115)"><use href="#artg"/></g>
<use href="#eye" x="998" y="596"/><use href="#cb" x="1017.500" y="596"/>
<path d="M1030,594.500l3.500,3.500 3.500-3.500" stroke="#d4d4d4" stroke-width="1.400"/>
<path d="M1045.500,602v-11.500h5l1.500,2h6v2.500" stroke="#c4c4c4" stroke-width="1.200"/><path d="M1045.500,602l3-6.500h13.500l-3,6.500z" fill="#c4c4c4" stroke="#c4c4c4" stroke-width="1"/>
<use href="#cb" x="998" y="628"/><use href="#cb" x="1017.500" y="628"/>
<path d="M1054,624l3.500,4-3.500,4" stroke="#d4d4d4" stroke-width="1.400"/>
<use href="#fold" x="1064.500" y="623"/>
<use href="#cb" x="998" y="659"/><use href="#cb" x="1017.500" y="659"/>
<path d="M1054,655l3.500,4-3.500,4" stroke="#d4d4d4" stroke-width="1.400"/>
<use href="#fold" x="1064.500" y="654"/>
<use href="#cb" x="998" y="690"/><use href="#cb" x="1017.500" y="690"/>
<path d="M1054,686l3.500,4-3.500,4" stroke="#d4d4d4" stroke-width="1.400"/>
<use href="#fold" x="1064.500" y="685"/>
<use href="#cb" x="998" y="721"/><use href="#cb" x="1017.500" y="721"/>
<path d="M1054,717l3.500,4-3.500,4" stroke="#d4d4d4" stroke-width="1.400"/>
<use href="#fold" x="1064.500" y="716"/>
<use href="#cb" x="998" y="752"/><use href="#cb" x="1017.500" y="752"/>
<path d="M1054,748l3.500,4-3.500,4" stroke="#d4d4d4" stroke-width="1.400"/>
<use href="#fold" x="1064.500" y="747"/>
<use href="#cb" x="998" y="783"/><use href="#cb" x="1017.500" y="783"/>
<path d="M1054,779l3.500,4-3.500,4" stroke="#d4d4d4" stroke-width="1.400"/>
<use href="#fold" x="1064.500" y="778"/>
<use href="#cb" x="998" y="814"/><use href="#cb" x="1017.500" y="814"/>
<path d="M1054,810l3.500,4-3.500,4" stroke="#d4d4d4" stroke-width="1.400"/>
<use href="#fold" x="1064.500" y="809"/>
<use href="#eye" x="998" y="845"/><use href="#cb" x="1017.500" y="845"/><path d="M1049.500,841l3.500,4-3.500,4" stroke="#d4d4d4" stroke-width="1.400"/><use href="#fold" x="1060.500" y="839.500"/>
<use href="#eye" x="998" y="880.500"/><use href="#cb" x="1017.500" y="880.500"/>
<rect x="1033.500" y="1023.500" width="33.500" height="16" fill="url(#ck)" stroke="none"/>
</svg>
</body></html>
